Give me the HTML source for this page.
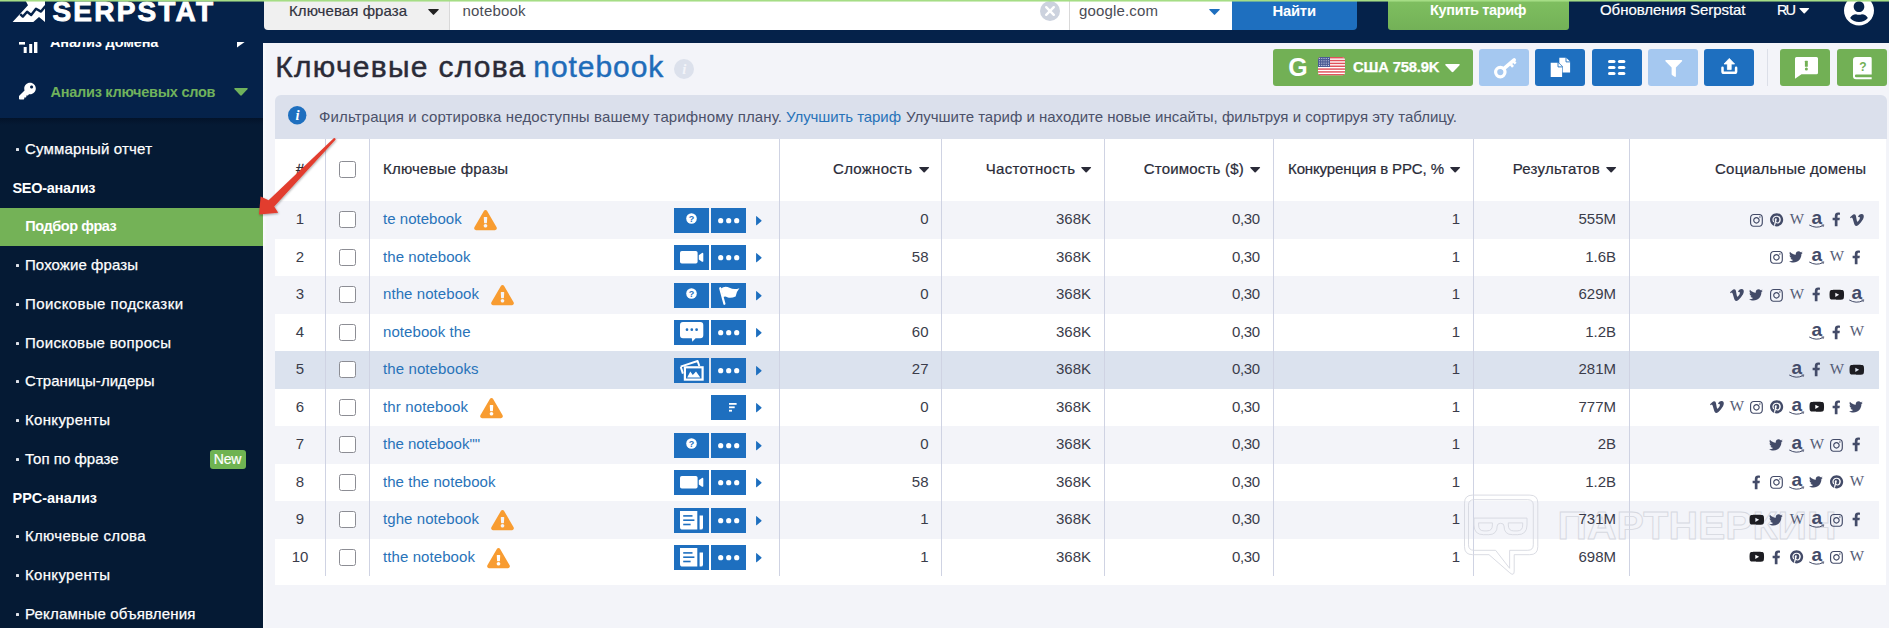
<!DOCTYPE html><html lang="ru"><head><meta charset="utf-8"><title>Serpstat</title><style>html,body{margin:0;padding:0}body{width:1889px;height:628px;overflow:hidden;position:relative;font-family:"Liberation Sans", sans-serif;background:#f3f4f9}svg{display:block;overflow:visible}span{display:block}</style></head><body>
<div style="position:absolute;left:0px;top:0px;width:1889px;height:628px;background:#f3f4f9;"></div>
<div style="position:absolute;left:263px;top:0px;width:1626px;height:43px;background:#05224a;"></div>
<div style="position:absolute;left:0px;top:0px;width:263px;height:628px;background:#051a34;"></div>
<div style="position:absolute;left:0px;top:0px;width:263px;height:118px;background:#05224a;"></div>
<div style="position:absolute;left:0px;top:118px;width:263px;height:7px;background:linear-gradient(#03132a,#051a34);"></div>
<div style="position:absolute;left:263px;top:43px;width:4px;height:585px;background:linear-gradient(90deg,#fafbfd,#f3f4f9);"></div>
<svg style="position:absolute;left:0px;top:0px;" width="60" height="30" viewBox="0 0 60 30"><path d="M25.2 0 L45 0 L45 22 L39 17 L33.3 22 L12.6 22 L28 5.2 Z" fill="#fff" /><path d="M20.2 14.2 L22.8 16.6 L27.1 11.7 L31.2 15 L36 8.8 L41 11.6 L45.5 6" fill="none" stroke="#05224a" stroke-width="2.4" stroke-linejoin="round"/></svg>
<span id="t1" style="position:absolute;top:-2.20px;font-size:28px;line-height:1;white-space:pre;color:#fff;font-weight:700;-webkit-text-stroke:0.9px #fff;letter-spacing:2.185px;left:52.50px;">SERPSTAT</span>
<div style="position:absolute;left:0;top:41.5px;width:263px;height:20px;overflow:hidden">
<span style="position:absolute;left:50px;top:-6.9px;font-size:14.5px;line-height:1;font-weight:700;color:#fff;white-space:pre;letter-spacing:-0.15px">Анализ домена</span>
<svg style="position:absolute;left:19px;top:-3px" width="20" height="16" viewBox="0 0 20 16"><rect x="0" y="3" width="6" height="2.6" fill="#fff"/><rect x="4.7" y="8" width="3" height="6" fill="#fff"/><rect x="10.2" y="5" width="3" height="9" fill="#fff"/><rect x="15" y="1" width="3.4" height="13" fill="#fff"/></svg>
<svg style="position:absolute;left:237px;top:-3px" width="10" height="10" viewBox="0 0 10 10"><path d="M0 8.6 L0 2 L9 2 Z" fill="#fff"/></svg>
</div>
<svg style="position:absolute;left:19.2px;top:82.3px;" width="16.8" height="18.4" viewBox="0 0 512 512"><path d="M512 176.001C512 273.203 433.202 352 336 352c-11.220 0-22.190-1.062-32.827-3.069l-24.012 27.014A23.999 23.999 0 0 1 261.223 384H224v40c0 13.255-10.745 24-24 24h-40v40c0 13.255-10.745 24-24 24H24c-13.255 0-24-10.745-24-24v-78.059c0-6.365 2.529-12.470 7.029-16.971l161.802-161.802C163.108 213.814 160 195.271 160 176 160 78.798 238.797.001 335.999 0 433.488-.001 512 78.511 512 176.001zM336 128c0 26.510 21.490 48 48 48s48-21.490 48-48-21.490-48-48-48-48 21.490-48 48z" fill="#fff" /></svg>
<span id="t2" style="position:absolute;top:84.73px;font-size:14.5px;line-height:1;white-space:pre;color:#70b25c;font-weight:700;letter-spacing:-0.256px;left:50.50px;">Анализ ключевых слов</span>
<svg style="position:absolute;left:234px;top:88px;" width="14" height="8" viewBox="0 0 14 8"><path d="M1.2 0 H12.8 Q14.6 0 13.4 1.3 L7.8 7.3 Q7 8.1 6.2 7.3 L0.6 1.3 Q-0.6 0 1.2 0 Z" fill="#70b25c" /></svg>
<div style="position:absolute;left:16.1px;top:147.95px;width:2.9px;height:2.9px;background:#dde1e8;border-radius:0.6px;"></div>
<span id="t3" style="position:absolute;top:141.00px;font-size:15px;line-height:1;white-space:pre;color:#fff;-webkit-text-stroke:0.25px #fff;letter-spacing:0.179px;left:25.00px;">Суммарный отчет</span>
<span id="t4" style="position:absolute;top:180.73px;font-size:14.5px;line-height:1;white-space:pre;color:#fff;font-weight:700;letter-spacing:-0.297px;left:12.50px;">SEO-анализ</span>
<div style="position:absolute;left:0px;top:208px;width:263px;height:38px;background:#74b257;"></div>
<span id="t5" style="position:absolute;top:218.73px;font-size:14.5px;line-height:1;white-space:pre;color:#fff;font-weight:700;letter-spacing:-0.450px;left:25.30px;">Подбор фраз</span>
<div style="position:absolute;left:16.1px;top:263.95px;width:2.9px;height:2.9px;background:#dde1e8;border-radius:0.6px;"></div>
<span id="t6" style="position:absolute;top:257.00px;font-size:15px;line-height:1;white-space:pre;color:#fff;-webkit-text-stroke:0.25px #fff;letter-spacing:0.091px;left:25.00px;">Похожие фразы</span>
<div style="position:absolute;left:16.1px;top:302.95px;width:2.9px;height:2.9px;background:#dde1e8;border-radius:0.6px;"></div>
<span id="t7" style="position:absolute;top:296.00px;font-size:15px;line-height:1;white-space:pre;color:#fff;-webkit-text-stroke:0.25px #fff;letter-spacing:0.411px;left:25.00px;">Поисковые подсказки</span>
<div style="position:absolute;left:16.1px;top:341.95px;width:2.9px;height:2.9px;background:#dde1e8;border-radius:0.6px;"></div>
<span id="t8" style="position:absolute;top:335.00px;font-size:15px;line-height:1;white-space:pre;color:#fff;-webkit-text-stroke:0.25px #fff;letter-spacing:0.339px;left:25.00px;">Поисковые вопросы</span>
<div style="position:absolute;left:16.1px;top:379.95px;width:2.9px;height:2.9px;background:#dde1e8;border-radius:0.6px;"></div>
<span id="t9" style="position:absolute;top:373.00px;font-size:15px;line-height:1;white-space:pre;color:#fff;-webkit-text-stroke:0.25px #fff;letter-spacing:0.051px;left:25.00px;">Страницы-лидеры</span>
<div style="position:absolute;left:16.1px;top:418.95px;width:2.9px;height:2.9px;background:#dde1e8;border-radius:0.6px;"></div>
<span id="t10" style="position:absolute;top:412.00px;font-size:15px;line-height:1;white-space:pre;color:#fff;-webkit-text-stroke:0.25px #fff;letter-spacing:0.328px;left:25.00px;">Конкуренты</span>
<div style="position:absolute;left:16.1px;top:457.95px;width:2.9px;height:2.9px;background:#dde1e8;border-radius:0.6px;"></div>
<span id="t11" style="position:absolute;top:451.00px;font-size:15px;line-height:1;white-space:pre;color:#fff;-webkit-text-stroke:0.25px #fff;letter-spacing:0.030px;left:25.00px;">Топ по фразе</span>
<span id="t12" style="position:absolute;top:490.73px;font-size:14.5px;line-height:1;white-space:pre;color:#fff;font-weight:700;letter-spacing:-0.042px;left:12.50px;">PPC-анализ</span>
<div style="position:absolute;left:16.1px;top:534.95px;width:2.9px;height:2.9px;background:#dde1e8;border-radius:0.6px;"></div>
<span id="t13" style="position:absolute;top:528.00px;font-size:15px;line-height:1;white-space:pre;color:#fff;-webkit-text-stroke:0.25px #fff;letter-spacing:0.290px;left:25.00px;">Ключевые слова</span>
<div style="position:absolute;left:16.1px;top:573.95px;width:2.9px;height:2.9px;background:#dde1e8;border-radius:0.6px;"></div>
<span id="t14" style="position:absolute;top:567.00px;font-size:15px;line-height:1;white-space:pre;color:#fff;-webkit-text-stroke:0.25px #fff;letter-spacing:0.328px;left:25.00px;">Конкуренты</span>
<div style="position:absolute;left:16.1px;top:612.95px;width:2.9px;height:2.9px;background:#dde1e8;border-radius:0.6px;"></div>
<span id="t15" style="position:absolute;top:606.00px;font-size:15px;line-height:1;white-space:pre;color:#fff;-webkit-text-stroke:0.25px #fff;letter-spacing:0.192px;left:25.00px;">Рекламные объявления</span>
<div style="position:absolute;left:210px;top:450px;width:35.5px;height:18.8px;background:#6fb352;border-radius:3px;"></div>
<span id="t16" style="position:absolute;top:451.95px;font-size:14px;line-height:1;white-space:pre;color:#fff;-webkit-text-stroke:0.2px #fff;letter-spacing:-0.208px;left:213.80px;">New</span>
<!-- header -->
<div style="position:absolute;left:264px;top:0px;width:185.5px;height:29.5px;background:#f0f0f0;border-radius:0 0 0 4px;"></div>
<div style="position:absolute;left:449px;top:0px;width:1px;height:29.5px;background:#d9d9d9;"></div>
<div style="position:absolute;left:450px;top:0px;width:619px;height:29.5px;background:#fff;"></div>
<span id="t17" style="position:absolute;top:2.80px;font-size:15px;line-height:1;white-space:pre;color:#30323e;-webkit-text-stroke:0.2px #30323e;letter-spacing:0.071px;left:289.00px;">Ключевая фраза</span>
<svg style="position:absolute;left:428px;top:8.5px;" width="11" height="6" viewBox="0 0 11 6"><path d="M0.8 0 H10.2 Q11.4 0 10.5 1 L6.1 5.6 Q5.5 6.2 4.9 5.6 L0.5 1 Q-0.4 0 0.8 0 Z" fill="#222" /></svg>
<span id="t18" style="position:absolute;top:2.80px;font-size:15px;line-height:1;white-space:pre;color:#4a4c55;letter-spacing:0.181px;left:462.50px;">notebook</span>
<svg style="position:absolute;left:1040px;top:1px;" width="20" height="20" viewBox="0 0 20 20"><circle cx="10" cy="10" r="10" fill="#ccd2de"/><path d="M6.2 6.2 L13.8 13.8 M13.8 6.2 L6.2 13.8" stroke="#fff" stroke-width="2.4" stroke-linecap="round"/></svg>
<div style="position:absolute;left:1069px;top:0px;width:1px;height:29.5px;background:#d9d9d9;"></div>
<div style="position:absolute;left:1070px;top:0px;width:161.5px;height:29.5px;background:#fff;"></div>
<span id="t19" style="position:absolute;top:2.80px;font-size:15px;line-height:1;white-space:pre;color:#4a4c55;letter-spacing:0.160px;left:1079.00px;">google.com</span>
<svg style="position:absolute;left:1209px;top:8.5px;" width="11" height="6" viewBox="0 0 11 6"><path d="M0.8 0 H10.2 Q11.4 0 10.5 1 L6.1 5.6 Q5.5 6.2 4.9 5.6 L0.5 1 Q-0.4 0 0.8 0 Z" fill="#1e6fbf" /></svg>
<div style="position:absolute;left:1231.5px;top:0px;width:125px;height:29.5px;background:#1e6fbf;border-radius:0 0 4px 0;"></div>
<span id="t20" style="position:absolute;top:3.97px;font-size:14.8px;line-height:1;white-space:pre;color:#fff;font-weight:700;letter-spacing:-0.215px;left:1272.50px;">Найти</span>
<div style="position:absolute;left:1388px;top:0px;width:180.5px;height:29.5px;background:linear-gradient(#7fbf60,#73b157);border-radius:0 0 3px 3px;"></div>
<span id="t21" style="position:absolute;top:2.93px;font-size:14.5px;line-height:1;white-space:pre;color:#fff;font-weight:700;letter-spacing:-0.342px;left:1430.00px;">Купить тариф</span>
<span id="t22" style="position:absolute;top:1.70px;font-size:15px;line-height:1;white-space:pre;color:#fff;-webkit-text-stroke:0.2px #fff;letter-spacing:-0.051px;left:1600.00px;">Обновления Serpstat</span>
<span id="t23" style="position:absolute;top:2.93px;font-size:14.5px;line-height:1;white-space:pre;color:#fff;-webkit-text-stroke:0.2px #fff;letter-spacing:-1.953px;left:1777.00px;">RU</span>
<svg style="position:absolute;left:1799px;top:7.5px;" width="10.5" height="5.5" viewBox="0 0 11 6"><path d="M0.8 0 H10.2 Q11.4 0 10.5 1 L6.1 5.6 Q5.5 6.2 4.9 5.6 L0.5 1 Q-0.4 0 0.8 0 Z" fill="#fff" /></svg>
<svg style="position:absolute;left:1843.5px;top:-5.5px;" width="30" height="31" viewBox="0 0 496 512"><circle cx="248" cy="256" r="240" fill="#05224a"/><path d="M248 8C111 8 0 119 0 256s111 248 248 248 248-111 248-248S385 8 248 8zm0 96c48.600 0 88 39.400 88 88s-39.400 88-88 88-88-39.400-88-88 39.400-88 88-88zm0 344c-58.700 0-111.300-26.600-146.500-68.200 18.800-35.400 55.600-59.800 98.500-59.800 2.400 0 4.800.4 7.100 1.100 13 4.200 26.600 6.900 40.900 6.900 14.300 0 28-2.700 40.900-6.900 2.300-.7 4.700-1.100 7.100-1.100 42.900 0 79.700 24.400 98.500 59.800C359.300 421.400 306.700 448 248 448z" fill="#fff" /></svg>
<span id="t24" style="position:absolute;top:52.20px;font-size:30px;line-height:1;white-space:pre;color:#2a2b38;-webkit-text-stroke:0.45px #2a2b38;letter-spacing:1.272px;left:275.30px;">Ключевые слова</span>
<span id="t25" style="position:absolute;top:52.20px;font-size:30px;line-height:1;white-space:pre;color:#1f6cb9;-webkit-text-stroke:0.45px #1f6cb9;letter-spacing:0.935px;left:533.30px;">notebook</span>
<svg style="position:absolute;left:674.4px;top:58.9px;" width="20" height="20" viewBox="0 0 19 19"><circle cx="9.5" cy="9.5" r="9.5" fill="#dce1ec"/><text x="9.7" y="14.3" font-family="Liberation Serif, serif" font-style="italic" font-weight="700" font-size="14" text-anchor="middle" fill="#f3f4f9">i</text></svg>
<div style="position:absolute;left:1273px;top:49px;width:200px;height:37px;background:#72b055;border-radius:3px;"></div>
<span id="t26" style="position:absolute;top:55.04px;font-size:25px;line-height:1;white-space:pre;color:#fff;font-weight:700;left:1288.30px;">G</span>
<svg style="position:absolute;left:1318px;top:57.2px;" width="27" height="18.5" viewBox="0 0 27 18.5"><defs><clipPath id="fc"><rect x="0" y="0" width="27" height="18.5" rx="3"/></clipPath></defs><g clip-path="url(#fc)"><rect x="0" y="0" width="27" height="18.5" rx="2.5" fill="#fff"/><rect x="0" y="0.00" width="27" height="1.45" fill="#e0505a"/><rect x="0" y="2.84" width="27" height="1.45" fill="#e0505a"/><rect x="0" y="5.68" width="27" height="1.45" fill="#e0505a"/><rect x="0" y="8.52" width="27" height="1.45" fill="#e0505a"/><rect x="0" y="11.36" width="27" height="1.45" fill="#e0505a"/><rect x="0" y="14.20" width="27" height="1.45" fill="#e0505a"/><rect x="0" y="17.04" width="27" height="1.45" fill="#e0505a"/><rect x="0" y="0" width="12" height="10" fill="#4b5b94"/><circle cx="1.6" cy="1.5" r="0.55" fill="#dfe3f2"/><circle cx="3.8" cy="1.5" r="0.55" fill="#dfe3f2"/><circle cx="6.0" cy="1.5" r="0.55" fill="#dfe3f2"/><circle cx="8.2" cy="1.5" r="0.55" fill="#dfe3f2"/><circle cx="10.4" cy="1.5" r="0.55" fill="#dfe3f2"/><circle cx="1.6" cy="3.8" r="0.55" fill="#dfe3f2"/><circle cx="3.8" cy="3.8" r="0.55" fill="#dfe3f2"/><circle cx="6.0" cy="3.8" r="0.55" fill="#dfe3f2"/><circle cx="8.2" cy="3.8" r="0.55" fill="#dfe3f2"/><circle cx="10.4" cy="3.8" r="0.55" fill="#dfe3f2"/><circle cx="1.6" cy="6.1" r="0.55" fill="#dfe3f2"/><circle cx="3.8" cy="6.1" r="0.55" fill="#dfe3f2"/><circle cx="6.0" cy="6.1" r="0.55" fill="#dfe3f2"/><circle cx="8.2" cy="6.1" r="0.55" fill="#dfe3f2"/><circle cx="10.4" cy="6.1" r="0.55" fill="#dfe3f2"/><circle cx="1.6" cy="8.4" r="0.55" fill="#dfe3f2"/><circle cx="3.8" cy="8.4" r="0.55" fill="#dfe3f2"/><circle cx="6.0" cy="8.4" r="0.55" fill="#dfe3f2"/><circle cx="8.2" cy="8.4" r="0.55" fill="#dfe3f2"/><circle cx="10.4" cy="8.4" r="0.55" fill="#dfe3f2"/></g></svg>
<span id="t27" style="position:absolute;top:60.07px;font-size:14.8px;line-height:1;white-space:pre;color:#fff;font-weight:700;-webkit-text-stroke:0.25px #fff;letter-spacing:-0.175px;left:1353.00px;">США 758.9K</span>
<svg style="position:absolute;left:1444.8px;top:64px;" width="15" height="8.5" viewBox="0 0 14 8"><path d="M1.2 0 H12.8 Q14.6 0 13.4 1.3 L7.8 7.3 Q7 8.1 6.2 7.3 L0.6 1.3 Q-0.6 0 1.2 0 Z" fill="#fff" /></svg>
<div style="position:absolute;left:1479px;top:49px;width:49.5px;height:37px;background:#a5c8f0;border-radius:3px;"></div>
<div style="position:absolute;left:1535px;top:49px;width:49.5px;height:37px;background:#1e6fbf;border-radius:3px;"></div>
<div style="position:absolute;left:1592px;top:49px;width:49.5px;height:37px;background:#1e6fbf;border-radius:3px;"></div>
<div style="position:absolute;left:1648px;top:49px;width:49.5px;height:37px;background:#a5c8f0;border-radius:3px;"></div>
<div style="position:absolute;left:1703.5px;top:49px;width:50px;height:37px;background:#1e6fbf;border-radius:3px;"></div>
<div style="position:absolute;left:1767.2px;top:49px;width:1px;height:37px;background:#dcdfe8;"></div>
<div style="position:absolute;left:1780px;top:49px;width:50px;height:37px;background:#72b055;border-radius:3px;"></div>
<div style="position:absolute;left:1837px;top:49px;width:49.8px;height:37px;background:#72b055;border-radius:3px;"></div>
<svg style="position:absolute;left:1490px;top:55px;" width="30" height="26" viewBox="0 0 30 26"><circle cx="10.3" cy="17.1" r="4.7" fill="none" stroke="#fff" stroke-width="3.2"/><path d="M13.9 13.7 L24.2 4.9" stroke="#fff" stroke-width="3.6" stroke-linecap="round"/><path d="M20.2 8.6 L23 11.8 M23.2 6 L25.6 8.6" stroke="#fff" stroke-width="2.6" stroke-linecap="butt"/></svg>
<svg style="position:absolute;left:1550px;top:57px;" width="22" height="22" viewBox="0 0 22 22"><path d="M9.3 0.7 H16.2 L20.1 4.6 V15.6 H9.3 Z" fill="#fff" /><path d="M16 0.4 V4.9 H20.4" fill="none" stroke="#1e6fbf" stroke-width="0.9"/><path d="M0.7 5.7 H8.2 L12.1 9.600 V20 H0.7 Z" fill="#fff" stroke="#1e6fbf" stroke-width="1.1" paint-order="stroke"/><path d="M8 5.400 V9.900 H12.400" fill="none" stroke="#1e6fbf" stroke-width="0.9"/></svg>
<svg style="position:absolute;left:1607.9px;top:60px;" width="18" height="16" viewBox="0 0 18 16"><rect x="0.0" y="0.0" width="7.5" height="3.1" rx="1.55" fill="#fff"/><rect x="9.9" y="0.0" width="7.5" height="3.1" rx="1.55" fill="#fff"/><rect x="0.0" y="6.0" width="7.5" height="3.1" rx="1.55" fill="#fff"/><rect x="9.9" y="6.0" width="7.5" height="3.1" rx="1.55" fill="#fff"/><rect x="0.0" y="12.0" width="7.5" height="3.1" rx="1.55" fill="#fff"/><rect x="9.9" y="12.0" width="7.5" height="3.1" rx="1.55" fill="#fff"/></svg>
<svg style="position:absolute;left:1664.5px;top:59.5px;" width="17.5" height="17" viewBox="0 0 512 512"><path d="M487.976 0H24.028C2.710 0-8.047 25.866 7.058 40.971L192 225.941V432c0 7.831 3.821 15.170 10.237 19.662l80 55.980C298.020 518.690 320 507.493 320 487.980V225.941l184.947-184.970C520.021 25.896 509.338 0 487.976 0z" fill="#fff" /></svg>
<svg style="position:absolute;left:1720px;top:57px;" width="19" height="19" viewBox="0 0 19 19"><path d="M9.3 1.4 L4 7 H7.4 V12.6 H11.2 V7 H14.6 Z" fill="#fff" stroke="#fff" stroke-width="0.8" stroke-linejoin="round"/><path d="M2.500 10.800 V14.500 Q2.500 15.800 3.800 15.800 H14.800 Q16.100 15.800 16.100 14.500 V10.800" fill="none" stroke="#fff" stroke-width="2.500" stroke-linecap="round"/></svg>
<svg style="position:absolute;left:1795px;top:57.3px;" width="24" height="22" viewBox="0 0 24 22"><path d="M1.500 0 H21.500 Q23 0 23 1.500 V15.800 Q23 17.300 21.500 17.300 H6.500 L0 21.800 V1.500 Q0 0 1.500 0 Z" fill="#fff"/><rect x="9.900" y="3.800" width="2.900" height="6" rx="0.500" fill="#72b055"/><circle cx="11.350" cy="12" r="1.500" fill="#72b055"/></svg>
<svg style="position:absolute;left:1853.4px;top:56.9px;" width="19" height="23" viewBox="0 0 19 23"><path d="M3 0 H17.300 Q18.700 0 18.700 1.400 V17.600 H3.200 Q1.900 17.600 1.900 18.900 Q1.900 20.200 3.200 20.200 H18.700 V22.300 H3 Q0 22.300 0 19.300 V3 Q0 0 3 0 Z" fill="#fff"/><text x="9.900" y="14" font-family="Liberation Sans, sans-serif" font-weight="700" font-size="12" text-anchor="middle" fill="#72b055">?</text></svg>
<!-- table -->
<div style="position:absolute;left:274.5px;top:94.6px;width:1612.5px;height:44px;background:#dbe0ec;border-radius:6px 6px 0 0;"></div>
<svg style="position:absolute;left:287.8px;top:106.3px;" width="18.4" height="18.4" viewBox="0 0 18.4 18.4"><circle cx="9.2" cy="9.2" r="9.2" fill="#1e6fbf"/><text x="9.6" y="14.2" font-family="Liberation Serif, serif" font-style="italic" font-weight="700" font-size="14.5" text-anchor="middle" fill="#fff">i</text></svg>
<span id="t28" style="position:absolute;top:109.20px;font-size:15px;line-height:1;white-space:pre;color:#4b5169;letter-spacing:0.125px;left:319.00px;">Фильтрация и сортировка недоступны вашему тарифному плану.</span>
<span id="t29" style="position:absolute;top:109.20px;font-size:15px;line-height:1;white-space:pre;color:#2873b9;letter-spacing:-0.075px;left:786.00px;">Улучшить тариф</span>
<span id="t30" style="position:absolute;top:109.20px;font-size:15px;line-height:1;white-space:pre;color:#4b5169;letter-spacing:-0.005px;left:906.00px;">Улучшите тариф и находите новые инсайты, фильтруя и сортируя эту таблицу.</span>
<div style="position:absolute;left:275px;top:138.5px;width:1611px;height:446px;background:#fff;"></div>
<div style="position:absolute;left:275px;top:201.3px;width:1604px;height:37.3px;background:#f3f4f9;"></div>
<div style="position:absolute;left:275px;top:276.3px;width:1604px;height:37.3px;background:#f3f4f9;"></div>
<div style="position:absolute;left:275px;top:351.3px;width:1604px;height:37.3px;background:#dbe2ee;"></div>
<div style="position:absolute;left:275px;top:426.3px;width:1604px;height:37.3px;background:#f3f4f9;"></div>
<div style="position:absolute;left:275px;top:501.3px;width:1604px;height:37.3px;background:#f3f4f9;"></div>
<div style="position:absolute;left:325.3px;top:138.5px;width:1px;height:437.2px;background:#cfd3e3;"></div>
<div style="position:absolute;left:369.3px;top:138.5px;width:1px;height:437.2px;background:#cfd3e3;"></div>
<div style="position:absolute;left:779.3px;top:138.5px;width:1px;height:437.2px;background:#cfd3e3;"></div>
<div style="position:absolute;left:941.3px;top:138.5px;width:1px;height:437.2px;background:#cfd3e3;"></div>
<div style="position:absolute;left:1104.3px;top:138.5px;width:1px;height:437.2px;background:#cfd3e3;"></div>
<div style="position:absolute;left:1273.3px;top:138.5px;width:1px;height:437.2px;background:#cfd3e3;"></div>
<div style="position:absolute;left:1473.3px;top:138.5px;width:1px;height:437.2px;background:#cfd3e3;"></div>
<div style="position:absolute;left:1629.3px;top:138.5px;width:1px;height:437.2px;background:#cfd3e3;"></div>
<svg style="position:absolute;left:1464px;top:495.3px;" width="380" height="85" viewBox="0 0 380 85"><g fill="none" stroke="#d6d8e0" stroke-width="0.9"><path d="M8.500 0.1 H65.800 Q73.800 0.1 73.800 8.100 V51.700 Q73.800 59.700 65.800 59.700 H50.200 V76 Q50.200 81.500 45.800 77.800 L25 59.700 H8.500 Q0.500 59.700 0.500 51.700 V8.100 Q0.500 0.100 8.500 0.100 Z"/><path d="M10 4.700 H63.800 Q69.300 4.700 69.300 10.200 V49.800 Q69.300 55.300 63.800 55.300 H45.600 V73.300 L31.600 55.300 H10 Q4.500 55.300 4.500 49.800 V10.200 Q4.500 4.700 10 4.700 Z"/><path d="M10 23.100 H63 V30 Q63 39.700 53.500 39.700 H48.500 Q40 39.700 40 31 Q40 28.300 36.600 28.300 Q33.200 28.300 33.200 31 Q33.200 39.700 24.500 39.700 H19.500 Q10 39.700 10 30 Z"/><path d="M14.600 27.900 H28.400 V30 Q28.400 35.900 23 35.900 H20 Q14.600 35.900 14.600 30 Z"/><path d="M44.300 27.900 H58.700 V30 Q58.700 35.900 53.300 35.900 H49.700 Q44.300 35.900 44.300 30 Z"/></g><text x="93.600" y="43.700" font-family="Liberation Sans, sans-serif" font-weight="700" font-size="39.500" fill="none" stroke="#d6d8e0" stroke-width="0.9" textLength="279" lengthAdjust="spacingAndGlyphs">ПАРТНЕРКИН</text></svg>
<div style="position:absolute;left:339.3px;top:161.3px;width:14.7px;height:15.2px;border:1px solid #8c8d94;border-radius:2.5px;background:#fff"></div>
<span id="t31" style="position:absolute;top:160.90px;font-size:15px;line-height:1;white-space:pre;color:#2a2b38;-webkit-text-stroke:0.3px #2a2b38;left:296.00px;">#</span>
<span id="t32" style="position:absolute;top:160.90px;font-size:15px;line-height:1;white-space:pre;color:#2a2b38;-webkit-text-stroke:0.22px #2a2b38;letter-spacing:0.204px;left:383.00px;">Ключевые фразы</span>
<span id="t33" style="position:absolute;top:160.90px;font-size:15px;line-height:1;white-space:pre;color:#2a2b38;-webkit-text-stroke:0.22px #2a2b38;letter-spacing:0.277px;right:976.72px;">Сложность</span>
<svg style="position:absolute;left:918.7px;top:167.20000000000002px;" width="10.3" height="5.6" viewBox="0 0 11 6"><path d="M0.8 0 H10.2 Q11.4 0 10.5 1 L6.1 5.6 Q5.5 6.2 4.9 5.6 L0.5 1 Q-0.4 0 0.8 0 Z" fill="#2a2b38" /></svg>
<span id="t34" style="position:absolute;top:160.90px;font-size:15px;line-height:1;white-space:pre;color:#2a2b38;-webkit-text-stroke:0.22px #2a2b38;letter-spacing:0.305px;right:813.70px;">Частотность</span>
<svg style="position:absolute;left:1080.7px;top:167.20000000000002px;" width="10.3" height="5.6" viewBox="0 0 11 6"><path d="M0.8 0 H10.2 Q11.4 0 10.5 1 L6.1 5.6 Q5.5 6.2 4.9 5.6 L0.5 1 Q-0.4 0 0.8 0 Z" fill="#2a2b38" /></svg>
<span id="t35" style="position:absolute;top:160.90px;font-size:15px;line-height:1;white-space:pre;color:#2a2b38;-webkit-text-stroke:0.22px #2a2b38;letter-spacing:0.199px;right:645.10px;">Стоимость ($)</span>
<svg style="position:absolute;left:1249.7px;top:167.20000000000002px;" width="10.3" height="5.6" viewBox="0 0 11 6"><path d="M0.8 0 H10.2 Q11.4 0 10.5 1 L6.1 5.6 Q5.5 6.2 4.9 5.6 L0.5 1 Q-0.4 0 0.8 0 Z" fill="#2a2b38" /></svg>
<span id="t36" style="position:absolute;top:160.90px;font-size:15px;line-height:1;white-space:pre;color:#2a2b38;-webkit-text-stroke:0.22px #2a2b38;letter-spacing:-0.122px;right:445.12px;">Конкуренция в PPC, %</span>
<svg style="position:absolute;left:1449.7px;top:167.20000000000002px;" width="10.3" height="5.6" viewBox="0 0 11 6"><path d="M0.8 0 H10.2 Q11.4 0 10.5 1 L6.1 5.6 Q5.5 6.2 4.9 5.6 L0.5 1 Q-0.4 0 0.8 0 Z" fill="#2a2b38" /></svg>
<span id="t37" style="position:absolute;top:160.90px;font-size:15px;line-height:1;white-space:pre;color:#2a2b38;-webkit-text-stroke:0.22px #2a2b38;letter-spacing:0.263px;right:289.04px;">Результатов</span>
<svg style="position:absolute;left:1605.7px;top:167.20000000000002px;" width="10.3" height="5.6" viewBox="0 0 11 6"><path d="M0.8 0 H10.2 Q11.4 0 10.5 1 L6.1 5.6 Q5.5 6.2 4.9 5.6 L0.5 1 Q-0.4 0 0.8 0 Z" fill="#2a2b38" /></svg>
<span id="t38" style="position:absolute;top:160.90px;font-size:15px;line-height:1;white-space:pre;color:#2a2b38;-webkit-text-stroke:0.22px #2a2b38;letter-spacing:0.222px;right:22.78px;">Социальные домены</span>
<span id="t39" style="position:absolute;top:210.60px;font-size:15px;line-height:1;white-space:pre;color:#3a3c4a;left:300.00px;transform:translateX(-50%);margin-left:0.00px;">1</span>
<div style="position:absolute;left:339.2px;top:211.2px;width:14.7px;height:15.2px;border:1px solid #8c8d94;border-radius:2.5px;background:#fff"></div>
<span id="t40" style="position:absolute;top:210.60px;font-size:15px;line-height:1;white-space:pre;color:#2873b9;letter-spacing:0.029px;left:383.00px;">te notebook</span>
<svg style="position:absolute;left:473.8px;top:210.4px;" width="23" height="20.2" viewBox="0 0 576 512"><path d="M569.517 440.013C587.975 472.007 564.806 512 527.940 512H48.054c-36.937 0-59.999-40.055-41.577-71.987L246.423 23.985c18.467-32.009 64.720-31.951 83.154 0l239.940 416.028zM288 354c-25.405 0-46 20.595-46 46s20.595 46 46 46 46-20.595 46-46-20.595-46-46-46zm-43.673-165.346l7.418 136c.347 6.364 5.609 11.346 11.982 11.346h48.546c6.373 0 11.635-4.982 11.982-11.346l7.418-136c.375-6.874-5.098-12.654-11.982-12.654h-63.383c-6.884 0-12.356 5.780-11.981 12.654z" fill="#f89c31" /></svg>
<div style="position:absolute;left:674px;top:208.0px;width:34.8px;height:24.6px;background:#1e6fbf;"></div>
<svg style="position:absolute;left:686.2px;top:213.4px;" width="11" height="11" viewBox="0 0 11 11"><circle cx="5.500" cy="5.500" r="5.300" fill="#fff"/><text x="5.500" y="8.8" font-family="Liberation Sans, sans-serif" font-weight="700" font-size="9" text-anchor="middle" fill="#1e6fbf">?</text></svg>
<div style="position:absolute;left:711.2px;top:208.0px;width:34.8px;height:24.6px;background:#1e6fbf;"></div>
<svg style="position:absolute;left:717.8px;top:217.60000000000002px;" width="21.4" height="5.4" viewBox="0 0 21.4 5.4"><circle cx="2.7" cy="2.7" r="2.600" fill="#fff"/><circle cx="10.700" cy="2.7" r="2.600" fill="#fff"/><circle cx="18.700" cy="2.7" r="2.600" fill="#fff"/></svg>
<svg style="position:absolute;left:756px;top:215.8px;" width="5.8" height="9.4" viewBox="0 0 6 10"><path d="M0 0.800 Q0 -0.300 0.900 0.400 L5.600 4.500 Q6.200 5 5.600 5.500 L0.900 9.600 Q0 10.300 0 9.200 Z" fill="#1e6fbf" /></svg>
<span id="t41" style="position:absolute;top:210.60px;font-size:15px;line-height:1;white-space:pre;color:#3a3c4a;right:960.50px;">0</span>
<span id="t42" style="position:absolute;top:210.60px;font-size:15px;line-height:1;white-space:pre;color:#3a3c4a;letter-spacing:-0.016px;right:798.02px;">368K</span>
<span id="t43" style="position:absolute;top:210.60px;font-size:15px;line-height:1;white-space:pre;color:#3a3c4a;letter-spacing:-0.401px;right:629.40px;">0,30</span>
<span id="t44" style="position:absolute;top:210.60px;font-size:15px;line-height:1;white-space:pre;color:#3a3c4a;right:429.00px;">1</span>
<span id="t45" style="position:absolute;top:210.60px;font-size:15px;line-height:1;white-space:pre;color:#3a3c4a;right:273.00px;">555M</span>
<svg style="position:absolute;left:1750.2px;top:212.8px;" width="12.9" height="14.74" viewBox="0 0 448 512"><path d="M224.1 141c-63.6 0-114.9 51.3-114.9 114.9s51.3 114.9 114.9 114.9S339 319.5 339 255.9 287.7 141 224.1 141zm0 189.6c-41.1 0-74.7-33.5-74.7-74.7s33.5-74.7 74.7-74.7 74.7 33.5 74.7 74.7-33.6 74.7-74.7 74.7zm146.4-194.3c0 14.9-12 26.8-26.8 26.8-14.9 0-26.8-12-26.8-26.8s12-26.8 26.8-26.8 26.8 12 26.8 26.8zm76.1 27.2c-1.7-35.9-9.9-67.7-36.2-93.9-26.2-26.2-58-34.4-93.9-36.2-37-2.1-147.9-2.1-184.9 0-35.8 1.7-67.6 9.9-93.9 36.1s-34.4 58-36.2 93.9c-2.1 37-2.1 147.9 0 184.9 1.7 35.9 9.900 67.700 36.200 93.900s58 34.400 93.900 36.200c37 2.100 147.900 2.100 184.900 0 35.900-1.700 67.700-9.900 93.900-36.200 26.200-26.200 34.400-58 36.200-93.900 2.100-37 2.100-147.800 0-184.800zM398.800 388c-7.800 19.600-22.900 34.700-42.600 42.600-29.500 11.700-99.500 9-132.100 9s-102.700 2.600-132.100-9c-19.600-7.800-34.700-22.900-42.600-42.600-11.700-29.500-9-99.500-9-132.100s-2.600-102.700 9-132.100c7.800-19.600 22.900-34.700 42.600-42.600 29.500-11.700 99.500-9 132.100-9s102.700-2.600 132.100 9c19.600 7.800 34.700 22.900 42.600 42.600 11.700 29.500 9 99.500 9 132.100s2.700 102.700-9 132.100z" fill="#434b68" /></svg>
<svg style="position:absolute;left:1770.1000000000001px;top:213.0px;" width="13.2" height="13.6" viewBox="0 0 496 512"><path d="M496 256c0 137-111 248-248 248-25.600 0-50.200-3.900-73.400-11.100 10.100-16.500 25.200-43.500 30.800-65 3-11.600 15.400-59 15.400-59 8.100 15.400 31.700 28.500 56.800 28.500 74.800 0 128.700-68.800 128.700-154.300 0-81.900-66.900-143.200-152.900-143.200-107 0-163.900 71.800-163.900 150.100 0 36.400 19.400 81.700 50.300 96.100 4.700 2.200 7.200 1.200 8.300-3.300.8-3.400 5-20.300 6.900-28.100.6-2.500.3-4.700-1.700-7.100-10.100-12.500-18.300-35.300-18.300-56.600 0-54.700 41.400-107.600 112-107.600 60.900 0 103.600 41.500 103.600 100.900 0 67.100-33.900 113.600-78 113.600-24.300 0-42.600-20.100-36.700-44.800 7-29.500 20.500-61.300 20.500-82.600 0-19-10.200-34.900-31.400-34.900-24.900 0-44.900 25.700-44.900 60.200 0 22 7.400 36.800 7.400 36.800s-24.500 103.800-29 123.200c-5 21.400-3 51.600-.9 71.200C65.400 450.900 0 361.100 0 256 0 119 111 8 248 8s248 111 248 248z" fill="#434b68" /></svg>
<svg style="position:absolute;left:1788.7px;top:211.8px;" width="16" height="16" viewBox="0 0 16 16"><text transform="translate(7.900 12.300) scale(1.07 1)" x="0" y="0" font-family="Liberation Serif, serif" font-size="14.200" text-anchor="middle" fill="#555c76">W</text></svg>
<svg style="position:absolute;left:1807.7px;top:209.8px;" width="18" height="20" viewBox="0 0 18 20"><text x="8.800" y="14.100" font-family="Liberation Sans, sans-serif" font-weight="700" font-size="19" text-anchor="middle" fill="#434b68">a</text><path d="M1.600 15.200 Q8.200 19 14.600 15.800" fill="none" stroke="#434b68" stroke-width="1" stroke-linecap="round"/><path d="M13.300 15 L15.900 14.800 L15 17" fill="none" stroke="#434b68" stroke-width="0.750"/></svg>
<svg style="position:absolute;left:1832.3px;top:212.4px;" width="8.6" height="14.9" viewBox="0 0 320 512"><path d="M279.14 288l14.22-92.66h-88.91v-60.13c0-25.35 12.42-50.06 52.24-50.06h40.42V6.26S260.43 0 225.36 0c-73.22 0-121.08 44.38-121.08 124.72v70.62H22.89V288h81.39v224h100.17V288z" fill="#434b68" /></svg>
<svg style="position:absolute;left:1849.5px;top:211.8px;" width="13.8" height="16" viewBox="0 0 448 512"><path d="M447.8 153.6c-2 43.600-32.400 103.300-91.400 179.100-60.900 79.200-112.400 118.800-154.600 118.800-26.100 0-48.200-24.100-66.300-72.300C100.300 250 85.300 174.300 56.200 174.300c-3.400 0-15.100 7.100-35.200 21.100L0 168.200c51.600-45.300 100.900-95.700 131.800-98.500 34.900-3.400 56.300 20.500 64.400 71.500 28.700 181.500 41.400 208.900 93.600 126.700 18.700-29.600 28.800-52.100 30.200-67.600 4.800-45.900-35.800-42.800-63.300-31 22-72.100 64.100-107.100 126.200-105.100 45.800 1.200 67.500 31.100 64.900 89.400z" fill="#434b68" /></svg>
<span id="t46" style="position:absolute;top:248.60px;font-size:15px;line-height:1;white-space:pre;color:#3a3c4a;left:300.00px;transform:translateX(-50%);margin-left:0.00px;">2</span>
<div style="position:absolute;left:339.2px;top:249.0px;width:14.7px;height:15.2px;border:1px solid #8c8d94;border-radius:2.5px;background:#fff"></div>
<span id="t47" style="position:absolute;top:248.60px;font-size:15px;line-height:1;white-space:pre;color:#2873b9;letter-spacing:0.068px;left:383.00px;">the notebook</span>
<div style="position:absolute;left:674px;top:245.2px;width:34.8px;height:24.6px;background:#1e6fbf;"></div>
<svg style="position:absolute;left:679.7px;top:251.2px;" width="24" height="12.6" viewBox="0 0 24 12.6"><rect x="0" y="0" width="17.600" height="12.600" rx="1.800" fill="#fff"/><path d="M18.800 4.200 L22 1.900 Q23.300 1.300 23.300 2.700 V9.900 Q23.300 11.300 22 10.700 L18.800 8.400 Z" fill="#fff"/></svg>
<div style="position:absolute;left:711.2px;top:245.2px;width:34.8px;height:24.6px;background:#1e6fbf;"></div>
<svg style="position:absolute;left:717.8px;top:254.8px;" width="21.4" height="5.4" viewBox="0 0 21.4 5.4"><circle cx="2.7" cy="2.7" r="2.600" fill="#fff"/><circle cx="10.700" cy="2.7" r="2.600" fill="#fff"/><circle cx="18.700" cy="2.7" r="2.600" fill="#fff"/></svg>
<svg style="position:absolute;left:756px;top:253.10000000000002px;" width="5.8" height="9.4" viewBox="0 0 6 10"><path d="M0 0.800 Q0 -0.300 0.900 0.400 L5.600 4.500 Q6.200 5 5.600 5.500 L0.900 9.600 Q0 10.300 0 9.200 Z" fill="#1e6fbf" /></svg>
<span id="t48" style="position:absolute;top:248.60px;font-size:15px;line-height:1;white-space:pre;color:#3a3c4a;right:960.50px;">58</span>
<span id="t49" style="position:absolute;top:248.60px;font-size:15px;line-height:1;white-space:pre;color:#3a3c4a;letter-spacing:-0.016px;right:798.02px;">368K</span>
<span id="t50" style="position:absolute;top:248.60px;font-size:15px;line-height:1;white-space:pre;color:#3a3c4a;letter-spacing:-0.401px;right:629.40px;">0,30</span>
<span id="t51" style="position:absolute;top:248.60px;font-size:15px;line-height:1;white-space:pre;color:#3a3c4a;right:429.00px;">1</span>
<span id="t52" style="position:absolute;top:248.60px;font-size:15px;line-height:1;white-space:pre;color:#3a3c4a;right:273.00px;">1.6B</span>
<svg style="position:absolute;left:1770.2px;top:250.10000000000002px;" width="12.9" height="14.74" viewBox="0 0 448 512"><path d="M224.1 141c-63.6 0-114.9 51.3-114.9 114.9s51.3 114.9 114.9 114.9S339 319.5 339 255.9 287.7 141 224.1 141zm0 189.6c-41.1 0-74.7-33.5-74.7-74.7s33.5-74.7 74.7-74.7 74.7 33.5 74.7 74.7-33.6 74.7-74.7 74.7zm146.4-194.3c0 14.9-12 26.8-26.8 26.8-14.9 0-26.8-12-26.8-26.8s12-26.8 26.8-26.8 26.8 12 26.8 26.8zm76.1 27.2c-1.7-35.9-9.9-67.7-36.2-93.9-26.2-26.2-58-34.4-93.9-36.2-37-2.1-147.9-2.1-184.9 0-35.8 1.7-67.6 9.9-93.9 36.1s-34.4 58-36.2 93.9c-2.1 37-2.1 147.9 0 184.9 1.7 35.9 9.900 67.700 36.200 93.900s58 34.400 93.900 36.200c37 2.100 147.900 2.100 184.900 0 35.900-1.700 67.700-9.900 93.900-36.200 26.200-26.200 34.400-58 36.200-93.900 2.100-37 2.100-147.800 0-184.800zM398.800 388c-7.800 19.600-22.900 34.700-42.600 42.600-29.500 11.700-99.500 9-132.100 9s-102.700 2.600-132.100-9c-19.600-7.800-34.700-22.900-42.600-42.600-11.700-29.500-9-99.500-9-132.100s-2.600-102.700 9-132.100c7.800-19.600 22.900-34.700 42.600-42.600 29.500-11.700 99.500-9 132.100-9s102.700-2.600 132.100 9c19.600 7.800 34.700 22.900 42.600 42.600 11.700 29.500 9 99.500 9 132.100s2.700 102.700-9 132.100z" fill="#434b68" /></svg>
<svg style="position:absolute;left:1789.3px;top:250.3px;" width="13.8" height="13.8" viewBox="0 0 512 512"><path d="M459.37 151.716c.325 4.548.325 9.097.325 13.645 0 138.72-105.583 298.558-298.558 298.558-59.452 0-114.68-17.219-161.137-47.106 8.447.974 16.568 1.299 25.34 1.299 49.055 0 94.213-16.568 130.274-44.832-46.132-.975-84.792-31.188-98.112-72.772 6.498.974 12.995 1.624 19.818 1.624 9.421 0 18.843-1.3 27.614-3.573-48.081-9.747-84.143-51.98-84.143-102.985v-1.299c13.969 7.797 30.214 12.67 47.431 13.319-28.264-18.843-46.781-51.005-46.781-87.391 0-19.492 5.197-37.36 14.294-52.954 51.655 63.675 129.3 105.258 216.365 109.807-1.624-7.797-2.599-15.918-2.599-24.04 0-57.828 46.782-104.934 104.934-104.934 30.213 0 57.502 12.67 76.67 33.137 23.715-4.548 46.456-13.32 66.599-25.34-7.798 24.366-24.366 44.833-46.132 57.827 21.117-2.273 41.584-8.122 60.426-16.243-14.292 20.791-32.161 39.308-52.628 54.253z" fill="#434b68" /></svg>
<svg style="position:absolute;left:1807.7px;top:247.10000000000002px;" width="18" height="20" viewBox="0 0 18 20"><text x="8.800" y="14.100" font-family="Liberation Sans, sans-serif" font-weight="700" font-size="19" text-anchor="middle" fill="#434b68">a</text><path d="M1.600 15.200 Q8.200 19 14.600 15.800" fill="none" stroke="#434b68" stroke-width="1" stroke-linecap="round"/><path d="M13.300 15 L15.900 14.800 L15 17" fill="none" stroke="#434b68" stroke-width="0.750"/></svg>
<svg style="position:absolute;left:1828.7px;top:249.10000000000002px;" width="16" height="16" viewBox="0 0 16 16"><text transform="translate(7.900 12.300) scale(1.07 1)" x="0" y="0" font-family="Liberation Serif, serif" font-size="14.200" text-anchor="middle" fill="#555c76">W</text></svg>
<svg style="position:absolute;left:1852.3px;top:249.70000000000002px;" width="8.6" height="14.9" viewBox="0 0 320 512"><path d="M279.14 288l14.22-92.66h-88.91v-60.13c0-25.35 12.42-50.06 52.24-50.06h40.42V6.26S260.43 0 225.36 0c-73.22 0-121.08 44.38-121.08 124.72v70.62H22.89V288h81.39v224h100.17V288z" fill="#434b68" /></svg>
<span id="t53" style="position:absolute;top:285.60px;font-size:15px;line-height:1;white-space:pre;color:#3a3c4a;left:300.00px;transform:translateX(-50%);margin-left:0.00px;">3</span>
<div style="position:absolute;left:339.2px;top:286.2px;width:14.7px;height:15.2px;border:1px solid #8c8d94;border-radius:2.5px;background:#fff"></div>
<span id="t54" style="position:absolute;top:285.60px;font-size:15px;line-height:1;white-space:pre;color:#2873b9;letter-spacing:0.076px;left:383.00px;">nthe notebook</span>
<svg style="position:absolute;left:491.1px;top:285.4px;" width="23" height="20.2" viewBox="0 0 576 512"><path d="M569.517 440.013C587.975 472.007 564.806 512 527.940 512H48.054c-36.937 0-59.999-40.055-41.577-71.987L246.423 23.985c18.467-32.009 64.720-31.951 83.154 0l239.940 416.028zM288 354c-25.405 0-46 20.595-46 46s20.595 46 46 46 46-20.595 46-46-20.595-46-46-46zm-43.673-165.346l7.418 136c.347 6.364 5.609 11.346 11.982 11.346h48.546c6.373 0 11.635-4.982 11.982-11.346l7.418-136c.375-6.874-5.098-12.654-11.982-12.654h-63.383c-6.884 0-12.356 5.780-11.981 12.654z" fill="#f89c31" /></svg>
<div style="position:absolute;left:674px;top:283.0px;width:34.8px;height:24.6px;background:#1e6fbf;"></div>
<svg style="position:absolute;left:686.2px;top:288.40000000000003px;" width="11" height="11" viewBox="0 0 11 11"><circle cx="5.500" cy="5.500" r="5.300" fill="#fff"/><text x="5.500" y="8.8" font-family="Liberation Sans, sans-serif" font-weight="700" font-size="9" text-anchor="middle" fill="#1e6fbf">?</text></svg>
<div style="position:absolute;left:711.2px;top:283.0px;width:34.8px;height:24.6px;background:#1e6fbf;"></div>
<svg style="position:absolute;left:719.2px;top:286.3px;" width="21" height="19" viewBox="0 0 21 19"><path d="M1.2 2.2 L5.400 17.8" stroke="#fff" stroke-width="2.2" stroke-linecap="round"/><path d="M2 2.4 Q6 -0.6 10.500 1.800 Q15 4.2 20.400 2.2 Q17.500 5.400 16.600 10.600 Q11.600 12.8 8.300 11.200 Q6 10 4.300 11.200 Z" fill="#fff"/></svg>
<svg style="position:absolute;left:756px;top:290.8px;" width="5.8" height="9.4" viewBox="0 0 6 10"><path d="M0 0.800 Q0 -0.300 0.900 0.400 L5.600 4.500 Q6.200 5 5.600 5.500 L0.900 9.600 Q0 10.300 0 9.200 Z" fill="#1e6fbf" /></svg>
<span id="t55" style="position:absolute;top:285.60px;font-size:15px;line-height:1;white-space:pre;color:#3a3c4a;right:960.50px;">0</span>
<span id="t56" style="position:absolute;top:285.60px;font-size:15px;line-height:1;white-space:pre;color:#3a3c4a;letter-spacing:-0.016px;right:798.02px;">368K</span>
<span id="t57" style="position:absolute;top:285.60px;font-size:15px;line-height:1;white-space:pre;color:#3a3c4a;letter-spacing:-0.401px;right:629.40px;">0,30</span>
<span id="t58" style="position:absolute;top:285.60px;font-size:15px;line-height:1;white-space:pre;color:#3a3c4a;right:429.00px;">1</span>
<span id="t59" style="position:absolute;top:285.60px;font-size:15px;line-height:1;white-space:pre;color:#3a3c4a;right:273.00px;">629M</span>
<svg style="position:absolute;left:1729.5px;top:286.8px;" width="13.8" height="16" viewBox="0 0 448 512"><path d="M447.8 153.6c-2 43.600-32.400 103.300-91.400 179.100-60.900 79.200-112.400 118.800-154.600 118.800-26.100 0-48.200-24.100-66.300-72.300C100.300 250 85.300 174.300 56.200 174.300c-3.400 0-15.100 7.100-35.200 21.100L0 168.200c51.600-45.300 100.900-95.700 131.800-98.500 34.900-3.400 56.300 20.500 64.400 71.500 28.700 181.500 41.400 208.900 93.600 126.700 18.700-29.600 28.800-52.100 30.200-67.600 4.800-45.900-35.800-42.800-63.300-31 22-72.100 64.100-107.100 126.200-105.100 45.800 1.200 67.500 31.100 64.900 89.400z" fill="#434b68" /></svg>
<svg style="position:absolute;left:1749.3px;top:288.0px;" width="13.8" height="13.8" viewBox="0 0 512 512"><path d="M459.37 151.716c.325 4.548.325 9.097.325 13.645 0 138.72-105.583 298.558-298.558 298.558-59.452 0-114.68-17.219-161.137-47.106 8.447.974 16.568 1.299 25.34 1.299 49.055 0 94.213-16.568 130.274-44.832-46.132-.975-84.792-31.188-98.112-72.772 6.498.974 12.995 1.624 19.818 1.624 9.421 0 18.843-1.3 27.614-3.573-48.081-9.747-84.143-51.98-84.143-102.985v-1.299c13.969 7.797 30.214 12.67 47.431 13.319-28.264-18.843-46.781-51.005-46.781-87.391 0-19.492 5.197-37.36 14.294-52.954 51.655 63.675 129.3 105.258 216.365 109.807-1.624-7.797-2.599-15.918-2.599-24.04 0-57.828 46.782-104.934 104.934-104.934 30.213 0 57.502 12.67 76.67 33.137 23.715-4.548 46.456-13.32 66.599-25.34-7.798 24.366-24.366 44.833-46.132 57.827 21.117-2.273 41.584-8.122 60.426-16.243-14.292 20.791-32.161 39.308-52.628 54.253z" fill="#434b68" /></svg>
<svg style="position:absolute;left:1770.2px;top:287.8px;" width="12.9" height="14.74" viewBox="0 0 448 512"><path d="M224.1 141c-63.6 0-114.9 51.3-114.9 114.9s51.3 114.9 114.9 114.9S339 319.5 339 255.9 287.7 141 224.1 141zm0 189.6c-41.1 0-74.7-33.5-74.7-74.7s33.5-74.7 74.7-74.7 74.7 33.5 74.7 74.7-33.6 74.7-74.7 74.7zm146.4-194.3c0 14.9-12 26.8-26.8 26.8-14.9 0-26.8-12-26.8-26.8s12-26.8 26.8-26.8 26.8 12 26.8 26.8zm76.1 27.2c-1.7-35.9-9.9-67.7-36.2-93.9-26.2-26.2-58-34.4-93.9-36.2-37-2.1-147.9-2.1-184.9 0-35.8 1.7-67.6 9.9-93.9 36.1s-34.4 58-36.2 93.9c-2.1 37-2.1 147.9 0 184.9 1.7 35.9 9.900 67.700 36.200 93.900s58 34.400 93.900 36.200c37 2.100 147.900 2.100 184.900 0 35.900-1.700 67.700-9.900 93.900-36.200 26.200-26.200 34.400-58 36.200-93.900 2.100-37 2.100-147.800 0-184.800zM398.800 388c-7.800 19.600-22.900 34.700-42.600 42.600-29.500 11.700-99.500 9-132.100 9s-102.700 2.600-132.100-9c-19.600-7.800-34.700-22.900-42.600-42.600-11.700-29.500-9-99.500-9-132.100s-2.600-102.700 9-132.100c7.800-19.600 22.900-34.700 42.600-42.600 29.500-11.700 99.500-9 132.100-9s102.700-2.600 132.100 9c19.600 7.800 34.700 22.900 42.600 42.600 11.700 29.500 9 99.500 9 132.100s2.700 102.700-9 132.100z" fill="#434b68" /></svg>
<svg style="position:absolute;left:1788.7px;top:286.8px;" width="16" height="16" viewBox="0 0 16 16"><text transform="translate(7.900 12.300) scale(1.07 1)" x="0" y="0" font-family="Liberation Serif, serif" font-size="14.200" text-anchor="middle" fill="#555c76">W</text></svg>
<svg style="position:absolute;left:1812.3px;top:287.40000000000003px;" width="8.6" height="14.9" viewBox="0 0 320 512"><path d="M279.14 288l14.22-92.66h-88.91v-60.13c0-25.35 12.42-50.06 52.24-50.06h40.42V6.26S260.43 0 225.36 0c-73.22 0-121.08 44.38-121.08 124.72v70.62H22.89V288h81.39v224h100.17V288z" fill="#434b68" /></svg>
<svg style="position:absolute;left:1828.8px;top:287.90000000000003px;" width="15.6" height="13.6" viewBox="0 0 576 512"><path d="M549.655 124.083c-6.281-23.65-24.787-42.276-48.284-48.597C458.781 64 288 64 288 64S117.22 64 74.629 75.486c-23.497 6.322-42.003 24.947-48.284 48.597-11.412 42.867-11.412 132.305-11.412 132.305s0 89.438 11.412 132.305c6.281 23.65 24.787 41.5 48.284 47.821C117.22 448 288 448 288 448s170.78 0 213.371-11.486c23.497-6.321 42.003-24.171 48.284-47.821 11.412-42.867 11.412-132.305 11.412-132.305s0-89.438-11.412-132.305zm-317.51 213.508V175.185l142.739 81.205-142.739 81.201z" fill="#1d1d22" /></svg>
<svg style="position:absolute;left:1847.7px;top:284.8px;" width="18" height="20" viewBox="0 0 18 20"><text x="8.800" y="14.100" font-family="Liberation Sans, sans-serif" font-weight="700" font-size="19" text-anchor="middle" fill="#434b68">a</text><path d="M1.600 15.200 Q8.200 19 14.600 15.800" fill="none" stroke="#434b68" stroke-width="1" stroke-linecap="round"/><path d="M13.300 15 L15.900 14.800 L15 17" fill="none" stroke="#434b68" stroke-width="0.750"/></svg>
<span id="t60" style="position:absolute;top:323.60px;font-size:15px;line-height:1;white-space:pre;color:#3a3c4a;left:300.00px;transform:translateX(-50%);margin-left:0.00px;">4</span>
<div style="position:absolute;left:339.2px;top:324.0px;width:14.7px;height:15.2px;border:1px solid #8c8d94;border-radius:2.5px;background:#fff"></div>
<span id="t61" style="position:absolute;top:323.60px;font-size:15px;line-height:1;white-space:pre;color:#2873b9;letter-spacing:0.068px;left:383.00px;">notebook the</span>
<div style="position:absolute;left:674px;top:320.2px;width:34.8px;height:24.6px;background:#1e6fbf;"></div>
<svg style="position:absolute;left:679.7px;top:322.4px;" width="24" height="20" viewBox="0 0 24 20"><path d="M3 0 H20.300 Q23.300 0 23.300 3 V13.300 Q23.300 16.300 20.300 16.300 H15.600 L12.300 19.700 L11.800 16.300 H3 Q0 16.300 0 13.300 V3 Q0 0 3 0 Z" fill="#fff"/><circle cx="7" cy="7.700" r="1.350" fill="#1e6fbf"/><circle cx="11.800" cy="7.700" r="1.350" fill="#1e6fbf"/><circle cx="16.600" cy="7.700" r="1.350" fill="#1e6fbf"/></svg>
<div style="position:absolute;left:711.2px;top:320.2px;width:34.8px;height:24.6px;background:#1e6fbf;"></div>
<svg style="position:absolute;left:717.8px;top:329.8px;" width="21.4" height="5.4" viewBox="0 0 21.4 5.4"><circle cx="2.7" cy="2.7" r="2.600" fill="#fff"/><circle cx="10.700" cy="2.7" r="2.600" fill="#fff"/><circle cx="18.700" cy="2.7" r="2.600" fill="#fff"/></svg>
<svg style="position:absolute;left:756px;top:328.1px;" width="5.8" height="9.4" viewBox="0 0 6 10"><path d="M0 0.800 Q0 -0.300 0.900 0.400 L5.600 4.500 Q6.200 5 5.600 5.500 L0.900 9.600 Q0 10.300 0 9.200 Z" fill="#1e6fbf" /></svg>
<span id="t62" style="position:absolute;top:323.60px;font-size:15px;line-height:1;white-space:pre;color:#3a3c4a;right:960.50px;">60</span>
<span id="t63" style="position:absolute;top:323.60px;font-size:15px;line-height:1;white-space:pre;color:#3a3c4a;letter-spacing:-0.016px;right:798.02px;">368K</span>
<span id="t64" style="position:absolute;top:323.60px;font-size:15px;line-height:1;white-space:pre;color:#3a3c4a;letter-spacing:-0.401px;right:629.40px;">0,30</span>
<span id="t65" style="position:absolute;top:323.60px;font-size:15px;line-height:1;white-space:pre;color:#3a3c4a;right:429.00px;">1</span>
<span id="t66" style="position:absolute;top:323.60px;font-size:15px;line-height:1;white-space:pre;color:#3a3c4a;right:273.00px;">1.2B</span>
<svg style="position:absolute;left:1807.7px;top:322.1px;" width="18" height="20" viewBox="0 0 18 20"><text x="8.800" y="14.100" font-family="Liberation Sans, sans-serif" font-weight="700" font-size="19" text-anchor="middle" fill="#434b68">a</text><path d="M1.600 15.200 Q8.200 19 14.600 15.800" fill="none" stroke="#434b68" stroke-width="1" stroke-linecap="round"/><path d="M13.300 15 L15.900 14.800 L15 17" fill="none" stroke="#434b68" stroke-width="0.750"/></svg>
<svg style="position:absolute;left:1832.3px;top:324.70000000000005px;" width="8.6" height="14.9" viewBox="0 0 320 512"><path d="M279.14 288l14.22-92.66h-88.91v-60.13c0-25.35 12.42-50.06 52.24-50.06h40.42V6.26S260.43 0 225.36 0c-73.22 0-121.08 44.38-121.08 124.72v70.62H22.89V288h81.39v224h100.17V288z" fill="#434b68" /></svg>
<svg style="position:absolute;left:1848.7px;top:324.1px;" width="16" height="16" viewBox="0 0 16 16"><text transform="translate(7.900 12.300) scale(1.07 1)" x="0" y="0" font-family="Liberation Serif, serif" font-size="14.200" text-anchor="middle" fill="#555c76">W</text></svg>
<span id="t67" style="position:absolute;top:360.60px;font-size:15px;line-height:1;white-space:pre;color:#3a3c4a;left:300.00px;transform:translateX(-50%);margin-left:0.00px;">5</span>
<div style="position:absolute;left:339.2px;top:361.2px;width:14.7px;height:15.2px;border:1px solid #8c8d94;border-radius:2.5px;background:#fff"></div>
<span id="t68" style="position:absolute;top:360.60px;font-size:15px;line-height:1;white-space:pre;color:#2873b9;letter-spacing:0.104px;left:383.00px;">the notebooks</span>
<div style="position:absolute;left:674px;top:358.0px;width:34.8px;height:24.6px;background:#1e6fbf;"></div>
<svg style="position:absolute;left:679px;top:359.3px;" width="26" height="23" viewBox="0 0 26 23"><path d="M1.600 7.600 L18.600 2 L20.300 7" fill="none" stroke="#fff" stroke-width="2" stroke-linejoin="round"/><path d="M1.800 8 L3.900 14.600" stroke="#fff" stroke-width="2"/><rect x="5.900" y="8.300" width="17.700" height="12.300" fill="none" stroke="#fff" stroke-width="2.200"/><path d="M8.200 18.600 L11.300 12.600 L13.800 16 L17 12.400 L21.300 18.600 Z" fill="#fff"/></svg>
<div style="position:absolute;left:711.2px;top:358.0px;width:34.8px;height:24.6px;background:#1e6fbf;"></div>
<svg style="position:absolute;left:717.8px;top:367.6px;" width="21.4" height="5.4" viewBox="0 0 21.4 5.4"><circle cx="2.7" cy="2.7" r="2.600" fill="#fff"/><circle cx="10.700" cy="2.7" r="2.600" fill="#fff"/><circle cx="18.700" cy="2.7" r="2.600" fill="#fff"/></svg>
<svg style="position:absolute;left:756px;top:365.8px;" width="5.8" height="9.4" viewBox="0 0 6 10"><path d="M0 0.800 Q0 -0.300 0.900 0.400 L5.600 4.500 Q6.200 5 5.600 5.500 L0.900 9.600 Q0 10.300 0 9.200 Z" fill="#1e6fbf" /></svg>
<span id="t69" style="position:absolute;top:360.60px;font-size:15px;line-height:1;white-space:pre;color:#3a3c4a;right:960.50px;">27</span>
<span id="t70" style="position:absolute;top:360.60px;font-size:15px;line-height:1;white-space:pre;color:#3a3c4a;letter-spacing:-0.016px;right:798.02px;">368K</span>
<span id="t71" style="position:absolute;top:360.60px;font-size:15px;line-height:1;white-space:pre;color:#3a3c4a;letter-spacing:-0.401px;right:629.40px;">0,30</span>
<span id="t72" style="position:absolute;top:360.60px;font-size:15px;line-height:1;white-space:pre;color:#3a3c4a;right:429.00px;">1</span>
<span id="t73" style="position:absolute;top:360.60px;font-size:15px;line-height:1;white-space:pre;color:#3a3c4a;right:273.00px;">281M</span>
<svg style="position:absolute;left:1787.7px;top:359.8px;" width="18" height="20" viewBox="0 0 18 20"><text x="8.800" y="14.100" font-family="Liberation Sans, sans-serif" font-weight="700" font-size="19" text-anchor="middle" fill="#434b68">a</text><path d="M1.600 15.200 Q8.200 19 14.600 15.800" fill="none" stroke="#434b68" stroke-width="1" stroke-linecap="round"/><path d="M13.300 15 L15.900 14.800 L15 17" fill="none" stroke="#434b68" stroke-width="0.750"/></svg>
<svg style="position:absolute;left:1812.3px;top:362.40000000000003px;" width="8.6" height="14.9" viewBox="0 0 320 512"><path d="M279.14 288l14.22-92.66h-88.91v-60.13c0-25.35 12.42-50.06 52.24-50.06h40.42V6.26S260.43 0 225.36 0c-73.22 0-121.08 44.38-121.08 124.72v70.62H22.89V288h81.39v224h100.17V288z" fill="#434b68" /></svg>
<svg style="position:absolute;left:1828.7px;top:361.8px;" width="16" height="16" viewBox="0 0 16 16"><text transform="translate(7.900 12.300) scale(1.07 1)" x="0" y="0" font-family="Liberation Serif, serif" font-size="14.200" text-anchor="middle" fill="#555c76">W</text></svg>
<svg style="position:absolute;left:1848.8px;top:362.90000000000003px;" width="15.6" height="13.6" viewBox="0 0 576 512"><path d="M549.655 124.083c-6.281-23.65-24.787-42.276-48.284-48.597C458.781 64 288 64 288 64S117.22 64 74.629 75.486c-23.497 6.322-42.003 24.947-48.284 48.597-11.412 42.867-11.412 132.305-11.412 132.305s0 89.438 11.412 132.305c6.281 23.65 24.787 41.5 48.284 47.821C117.22 448 288 448 288 448s170.78 0 213.371-11.486c23.497-6.321 42.003-24.171 48.284-47.821 11.412-42.867 11.412-132.305 11.412-132.305s0-89.438-11.412-132.305zm-317.51 213.508V175.185l142.739 81.205-142.739 81.201z" fill="#1d1d22" /></svg>
<span id="t74" style="position:absolute;top:398.60px;font-size:15px;line-height:1;white-space:pre;color:#3a3c4a;left:300.00px;transform:translateX(-50%);margin-left:0.00px;">6</span>
<div style="position:absolute;left:339.2px;top:399.0px;width:14.7px;height:15.2px;border:1px solid #8c8d94;border-radius:2.5px;background:#fff"></div>
<span id="t75" style="position:absolute;top:398.60px;font-size:15px;line-height:1;white-space:pre;color:#2873b9;letter-spacing:0.145px;left:383.00px;">thr notebook</span>
<svg style="position:absolute;left:480.1px;top:397.7px;" width="23" height="20.2" viewBox="0 0 576 512"><path d="M569.517 440.013C587.975 472.007 564.806 512 527.940 512H48.054c-36.937 0-59.999-40.055-41.577-71.987L246.423 23.985c18.467-32.009 64.720-31.951 83.154 0l239.940 416.028zM288 354c-25.405 0-46 20.595-46 46s20.595 46 46 46 46-20.595 46-46-20.595-46-46-46zm-43.673-165.346l7.418 136c.347 6.364 5.609 11.346 11.982 11.346h48.546c6.373 0 11.635-4.982 11.982-11.346l7.418-136c.375-6.874-5.098-12.654-11.982-12.654h-63.383c-6.884 0-12.356 5.780-11.981 12.654z" fill="#f89c31" /></svg>
<div style="position:absolute;left:711.2px;top:395.2px;width:34.8px;height:24.6px;background:#1e6fbf;"></div>
<svg style="position:absolute;left:728.8000000000001px;top:403.2px;" width="8" height="9" viewBox="0 0 8 9"><rect x="0" y="0" width="7.600" height="1.800" fill="#fff"/><rect x="0" y="3.400" width="5.700" height="1.800" fill="#fff"/><rect x="0" y="6.800" width="3" height="1.800" fill="#fff"/></svg>
<svg style="position:absolute;left:756px;top:403.1px;" width="5.8" height="9.4" viewBox="0 0 6 10"><path d="M0 0.800 Q0 -0.300 0.900 0.400 L5.600 4.500 Q6.200 5 5.600 5.500 L0.900 9.600 Q0 10.300 0 9.200 Z" fill="#1e6fbf" /></svg>
<span id="t76" style="position:absolute;top:398.60px;font-size:15px;line-height:1;white-space:pre;color:#3a3c4a;right:960.50px;">0</span>
<span id="t77" style="position:absolute;top:398.60px;font-size:15px;line-height:1;white-space:pre;color:#3a3c4a;letter-spacing:-0.016px;right:798.02px;">368K</span>
<span id="t78" style="position:absolute;top:398.60px;font-size:15px;line-height:1;white-space:pre;color:#3a3c4a;letter-spacing:-0.401px;right:629.40px;">0,30</span>
<span id="t79" style="position:absolute;top:398.60px;font-size:15px;line-height:1;white-space:pre;color:#3a3c4a;right:429.00px;">1</span>
<span id="t80" style="position:absolute;top:398.60px;font-size:15px;line-height:1;white-space:pre;color:#3a3c4a;right:273.00px;">777M</span>
<svg style="position:absolute;left:1709.5px;top:399.1px;" width="13.8" height="16" viewBox="0 0 448 512"><path d="M447.8 153.6c-2 43.600-32.400 103.300-91.400 179.100-60.900 79.200-112.400 118.800-154.600 118.800-26.100 0-48.200-24.100-66.300-72.300C100.300 250 85.300 174.300 56.200 174.300c-3.400 0-15.100 7.100-35.200 21.100L0 168.200c51.600-45.300 100.900-95.700 131.800-98.500 34.900-3.400 56.300 20.500 64.400 71.500 28.700 181.500 41.400 208.900 93.600 126.700 18.700-29.600 28.800-52.100 30.200-67.600 4.800-45.900-35.800-42.800-63.300-31 22-72.100 64.100-107.100 126.200-105.100 45.800 1.200 67.500 31.100 64.900 89.400z" fill="#434b68" /></svg>
<svg style="position:absolute;left:1728.7px;top:399.1px;" width="16" height="16" viewBox="0 0 16 16"><text transform="translate(7.900 12.300) scale(1.07 1)" x="0" y="0" font-family="Liberation Serif, serif" font-size="14.200" text-anchor="middle" fill="#555c76">W</text></svg>
<svg style="position:absolute;left:1750.2px;top:400.1px;" width="12.9" height="14.74" viewBox="0 0 448 512"><path d="M224.1 141c-63.6 0-114.9 51.3-114.9 114.9s51.3 114.9 114.9 114.9S339 319.5 339 255.9 287.7 141 224.1 141zm0 189.6c-41.1 0-74.7-33.5-74.7-74.7s33.5-74.7 74.7-74.7 74.7 33.5 74.7 74.7-33.6 74.7-74.7 74.7zm146.4-194.3c0 14.9-12 26.8-26.8 26.8-14.9 0-26.8-12-26.8-26.8s12-26.8 26.8-26.8 26.8 12 26.8 26.8zm76.1 27.2c-1.7-35.9-9.9-67.7-36.2-93.9-26.2-26.2-58-34.4-93.9-36.2-37-2.1-147.9-2.1-184.9 0-35.8 1.7-67.6 9.9-93.9 36.1s-34.4 58-36.2 93.9c-2.1 37-2.1 147.9 0 184.9 1.7 35.9 9.900 67.700 36.200 93.900s58 34.400 93.900 36.200c37 2.100 147.900 2.100 184.900 0 35.900-1.700 67.700-9.900 93.900-36.200 26.200-26.200 34.400-58 36.200-93.900 2.100-37 2.100-147.800 0-184.800zM398.800 388c-7.800 19.600-22.900 34.700-42.600 42.600-29.500 11.700-99.500 9-132.100 9s-102.700 2.600-132.100-9c-19.600-7.800-34.700-22.900-42.600-42.600-11.700-29.500-9-99.500-9-132.100s-2.600-102.700 9-132.100c7.800-19.600 22.900-34.700 42.600-42.600 29.500-11.700 99.500-9 132.100-9s102.700-2.600 132.100 9c19.600 7.800 34.700 22.900 42.600 42.600 11.700 29.500 9 99.500 9 132.100s2.700 102.700-9 132.100z" fill="#434b68" /></svg>
<svg style="position:absolute;left:1770.1000000000001px;top:400.3px;" width="13.2" height="13.6" viewBox="0 0 496 512"><path d="M496 256c0 137-111 248-248 248-25.600 0-50.200-3.900-73.400-11.100 10.100-16.500 25.200-43.500 30.800-65 3-11.600 15.400-59 15.400-59 8.100 15.400 31.700 28.500 56.800 28.500 74.800 0 128.700-68.800 128.700-154.300 0-81.900-66.900-143.200-152.900-143.200-107 0-163.900 71.800-163.900 150.100 0 36.400 19.400 81.700 50.300 96.100 4.700 2.200 7.200 1.200 8.300-3.300.8-3.400 5-20.300 6.900-28.100.6-2.500.3-4.700-1.700-7.100-10.100-12.500-18.300-35.300-18.300-56.600 0-54.700 41.400-107.600 112-107.600 60.900 0 103.600 41.500 103.600 100.900 0 67.100-33.900 113.600-78 113.600-24.300 0-42.600-20.100-36.700-44.800 7-29.500 20.500-61.300 20.500-82.600 0-19-10.200-34.900-31.400-34.900-24.900 0-44.900 25.700-44.900 60.200 0 22 7.400 36.800 7.400 36.800s-24.500 103.800-29 123.200c-5 21.400-3 51.600-.9 71.200C65.400 450.900 0 361.100 0 256 0 119 111 8 248 8s248 111 248 248z" fill="#434b68" /></svg>
<svg style="position:absolute;left:1787.7px;top:397.1px;" width="18" height="20" viewBox="0 0 18 20"><text x="8.800" y="14.100" font-family="Liberation Sans, sans-serif" font-weight="700" font-size="19" text-anchor="middle" fill="#434b68">a</text><path d="M1.600 15.200 Q8.200 19 14.600 15.800" fill="none" stroke="#434b68" stroke-width="1" stroke-linecap="round"/><path d="M13.300 15 L15.900 14.800 L15 17" fill="none" stroke="#434b68" stroke-width="0.750"/></svg>
<svg style="position:absolute;left:1808.8px;top:400.20000000000005px;" width="15.6" height="13.6" viewBox="0 0 576 512"><path d="M549.655 124.083c-6.281-23.65-24.787-42.276-48.284-48.597C458.781 64 288 64 288 64S117.22 64 74.629 75.486c-23.497 6.322-42.003 24.947-48.284 48.597-11.412 42.867-11.412 132.305-11.412 132.305s0 89.438 11.412 132.305c6.281 23.65 24.787 41.5 48.284 47.821C117.22 448 288 448 288 448s170.78 0 213.371-11.486c23.497-6.321 42.003-24.171 48.284-47.821 11.412-42.867 11.412-132.305 11.412-132.305s0-89.438-11.412-132.305zm-317.51 213.508V175.185l142.739 81.205-142.739 81.201z" fill="#1d1d22" /></svg>
<svg style="position:absolute;left:1832.3px;top:399.70000000000005px;" width="8.6" height="14.9" viewBox="0 0 320 512"><path d="M279.14 288l14.22-92.66h-88.91v-60.13c0-25.35 12.42-50.06 52.24-50.06h40.42V6.26S260.43 0 225.36 0c-73.22 0-121.08 44.38-121.08 124.72v70.62H22.89V288h81.39v224h100.17V288z" fill="#434b68" /></svg>
<svg style="position:absolute;left:1849.3px;top:400.3px;" width="13.8" height="13.8" viewBox="0 0 512 512"><path d="M459.37 151.716c.325 4.548.325 9.097.325 13.645 0 138.72-105.583 298.558-298.558 298.558-59.452 0-114.68-17.219-161.137-47.106 8.447.974 16.568 1.299 25.34 1.299 49.055 0 94.213-16.568 130.274-44.832-46.132-.975-84.792-31.188-98.112-72.772 6.498.974 12.995 1.624 19.818 1.624 9.421 0 18.843-1.3 27.614-3.573-48.081-9.747-84.143-51.98-84.143-102.985v-1.299c13.969 7.797 30.214 12.67 47.431 13.319-28.264-18.843-46.781-51.005-46.781-87.391 0-19.492 5.197-37.36 14.294-52.954 51.655 63.675 129.3 105.258 216.365 109.807-1.624-7.797-2.599-15.918-2.599-24.04 0-57.828 46.782-104.934 104.934-104.934 30.213 0 57.502 12.67 76.67 33.137 23.715-4.548 46.456-13.32 66.599-25.34-7.798 24.366-24.366 44.833-46.132 57.827 21.117-2.273 41.584-8.122 60.426-16.243-14.292 20.791-32.161 39.308-52.628 54.253z" fill="#434b68" /></svg>
<span id="t81" style="position:absolute;top:435.60px;font-size:15px;line-height:1;white-space:pre;color:#3a3c4a;left:300.00px;transform:translateX(-50%);margin-left:0.00px;">7</span>
<div style="position:absolute;left:339.2px;top:436.2px;width:14.7px;height:15.2px;border:1px solid #8c8d94;border-radius:2.5px;background:#fff"></div>
<span id="t82" style="position:absolute;top:435.60px;font-size:15px;line-height:1;white-space:pre;color:#2873b9;letter-spacing:-0.030px;left:383.00px;">the notebook""</span>
<div style="position:absolute;left:674px;top:433.0px;width:34.8px;height:24.6px;background:#1e6fbf;"></div>
<svg style="position:absolute;left:686.2px;top:438.40000000000003px;" width="11" height="11" viewBox="0 0 11 11"><circle cx="5.500" cy="5.500" r="5.300" fill="#fff"/><text x="5.500" y="8.8" font-family="Liberation Sans, sans-serif" font-weight="700" font-size="9" text-anchor="middle" fill="#1e6fbf">?</text></svg>
<div style="position:absolute;left:711.2px;top:433.0px;width:34.8px;height:24.6px;background:#1e6fbf;"></div>
<svg style="position:absolute;left:717.8px;top:442.6px;" width="21.4" height="5.4" viewBox="0 0 21.4 5.4"><circle cx="2.7" cy="2.7" r="2.600" fill="#fff"/><circle cx="10.700" cy="2.7" r="2.600" fill="#fff"/><circle cx="18.700" cy="2.7" r="2.600" fill="#fff"/></svg>
<svg style="position:absolute;left:756px;top:440.8px;" width="5.8" height="9.4" viewBox="0 0 6 10"><path d="M0 0.800 Q0 -0.300 0.900 0.400 L5.600 4.500 Q6.200 5 5.600 5.500 L0.900 9.600 Q0 10.300 0 9.200 Z" fill="#1e6fbf" /></svg>
<span id="t83" style="position:absolute;top:435.60px;font-size:15px;line-height:1;white-space:pre;color:#3a3c4a;right:960.50px;">0</span>
<span id="t84" style="position:absolute;top:435.60px;font-size:15px;line-height:1;white-space:pre;color:#3a3c4a;letter-spacing:-0.016px;right:798.02px;">368K</span>
<span id="t85" style="position:absolute;top:435.60px;font-size:15px;line-height:1;white-space:pre;color:#3a3c4a;letter-spacing:-0.401px;right:629.40px;">0,30</span>
<span id="t86" style="position:absolute;top:435.60px;font-size:15px;line-height:1;white-space:pre;color:#3a3c4a;right:429.00px;">1</span>
<span id="t87" style="position:absolute;top:435.60px;font-size:15px;line-height:1;white-space:pre;color:#3a3c4a;right:273.00px;">2B</span>
<svg style="position:absolute;left:1769.3px;top:438.0px;" width="13.8" height="13.8" viewBox="0 0 512 512"><path d="M459.37 151.716c.325 4.548.325 9.097.325 13.645 0 138.72-105.583 298.558-298.558 298.558-59.452 0-114.68-17.219-161.137-47.106 8.447.974 16.568 1.299 25.34 1.299 49.055 0 94.213-16.568 130.274-44.832-46.132-.975-84.792-31.188-98.112-72.772 6.498.974 12.995 1.624 19.818 1.624 9.421 0 18.843-1.3 27.614-3.573-48.081-9.747-84.143-51.98-84.143-102.985v-1.299c13.969 7.797 30.214 12.67 47.431 13.319-28.264-18.843-46.781-51.005-46.781-87.391 0-19.492 5.197-37.36 14.294-52.954 51.655 63.675 129.3 105.258 216.365 109.807-1.624-7.797-2.599-15.918-2.599-24.04 0-57.828 46.782-104.934 104.934-104.934 30.213 0 57.502 12.67 76.67 33.137 23.715-4.548 46.456-13.32 66.599-25.34-7.798 24.366-24.366 44.833-46.132 57.827 21.117-2.273 41.584-8.122 60.426-16.243-14.292 20.791-32.161 39.308-52.628 54.253z" fill="#434b68" /></svg>
<svg style="position:absolute;left:1787.7px;top:434.8px;" width="18" height="20" viewBox="0 0 18 20"><text x="8.800" y="14.100" font-family="Liberation Sans, sans-serif" font-weight="700" font-size="19" text-anchor="middle" fill="#434b68">a</text><path d="M1.600 15.200 Q8.200 19 14.600 15.800" fill="none" stroke="#434b68" stroke-width="1" stroke-linecap="round"/><path d="M13.300 15 L15.900 14.800 L15 17" fill="none" stroke="#434b68" stroke-width="0.750"/></svg>
<svg style="position:absolute;left:1808.7px;top:436.8px;" width="16" height="16" viewBox="0 0 16 16"><text transform="translate(7.900 12.300) scale(1.07 1)" x="0" y="0" font-family="Liberation Serif, serif" font-size="14.200" text-anchor="middle" fill="#555c76">W</text></svg>
<svg style="position:absolute;left:1830.2px;top:437.8px;" width="12.9" height="14.74" viewBox="0 0 448 512"><path d="M224.1 141c-63.6 0-114.9 51.3-114.9 114.9s51.3 114.9 114.9 114.9S339 319.5 339 255.9 287.7 141 224.1 141zm0 189.6c-41.1 0-74.7-33.5-74.7-74.7s33.5-74.7 74.7-74.7 74.7 33.5 74.7 74.7-33.6 74.7-74.7 74.7zm146.4-194.3c0 14.9-12 26.8-26.8 26.8-14.9 0-26.8-12-26.8-26.8s12-26.8 26.8-26.8 26.8 12 26.8 26.8zm76.1 27.2c-1.7-35.9-9.9-67.7-36.2-93.9-26.2-26.2-58-34.4-93.9-36.2-37-2.1-147.9-2.1-184.9 0-35.8 1.7-67.6 9.9-93.9 36.1s-34.4 58-36.2 93.9c-2.1 37-2.1 147.9 0 184.9 1.7 35.9 9.900 67.700 36.200 93.900s58 34.400 93.900 36.200c37 2.100 147.900 2.100 184.900 0 35.900-1.700 67.700-9.900 93.900-36.200 26.200-26.200 34.400-58 36.200-93.900 2.100-37 2.100-147.800 0-184.800zM398.800 388c-7.800 19.600-22.900 34.700-42.600 42.600-29.500 11.700-99.500 9-132.100 9s-102.700 2.600-132.100-9c-19.600-7.800-34.700-22.900-42.600-42.600-11.700-29.500-9-99.500-9-132.100s-2.600-102.700 9-132.100c7.800-19.600 22.900-34.700 42.600-42.600 29.500-11.700 99.500-9 132.100-9s102.700-2.600 132.100 9c19.600 7.800 34.700 22.900 42.600 42.600 11.700 29.500 9 99.500 9 132.100s2.700 102.700-9 132.100z" fill="#434b68" /></svg>
<svg style="position:absolute;left:1852.3px;top:437.40000000000003px;" width="8.6" height="14.9" viewBox="0 0 320 512"><path d="M279.14 288l14.22-92.66h-88.91v-60.13c0-25.35 12.42-50.06 52.24-50.06h40.42V6.26S260.43 0 225.36 0c-73.22 0-121.08 44.38-121.08 124.72v70.62H22.89V288h81.39v224h100.17V288z" fill="#434b68" /></svg>
<span id="t88" style="position:absolute;top:473.60px;font-size:15px;line-height:1;white-space:pre;color:#3a3c4a;left:300.00px;transform:translateX(-50%);margin-left:0.00px;">8</span>
<div style="position:absolute;left:339.2px;top:474.0px;width:14.7px;height:15.2px;border:1px solid #8c8d94;border-radius:2.5px;background:#fff"></div>
<span id="t89" style="position:absolute;top:473.60px;font-size:15px;line-height:1;white-space:pre;color:#2873b9;letter-spacing:0.049px;left:383.00px;">the the notebook</span>
<div style="position:absolute;left:674px;top:470.2px;width:34.8px;height:24.6px;background:#1e6fbf;"></div>
<svg style="position:absolute;left:679.7px;top:476.2px;" width="24" height="12.6" viewBox="0 0 24 12.6"><rect x="0" y="0" width="17.600" height="12.600" rx="1.800" fill="#fff"/><path d="M18.800 4.200 L22 1.900 Q23.300 1.300 23.300 2.700 V9.900 Q23.300 11.300 22 10.700 L18.800 8.400 Z" fill="#fff"/></svg>
<div style="position:absolute;left:711.2px;top:470.2px;width:34.8px;height:24.6px;background:#1e6fbf;"></div>
<svg style="position:absolute;left:717.8px;top:479.8px;" width="21.4" height="5.4" viewBox="0 0 21.4 5.4"><circle cx="2.7" cy="2.7" r="2.600" fill="#fff"/><circle cx="10.700" cy="2.7" r="2.600" fill="#fff"/><circle cx="18.700" cy="2.7" r="2.600" fill="#fff"/></svg>
<svg style="position:absolute;left:756px;top:478.1px;" width="5.8" height="9.4" viewBox="0 0 6 10"><path d="M0 0.800 Q0 -0.300 0.900 0.400 L5.600 4.500 Q6.200 5 5.600 5.500 L0.900 9.600 Q0 10.300 0 9.200 Z" fill="#1e6fbf" /></svg>
<span id="t90" style="position:absolute;top:473.60px;font-size:15px;line-height:1;white-space:pre;color:#3a3c4a;right:960.50px;">58</span>
<span id="t91" style="position:absolute;top:473.60px;font-size:15px;line-height:1;white-space:pre;color:#3a3c4a;letter-spacing:-0.016px;right:798.02px;">368K</span>
<span id="t92" style="position:absolute;top:473.60px;font-size:15px;line-height:1;white-space:pre;color:#3a3c4a;letter-spacing:-0.401px;right:629.40px;">0,30</span>
<span id="t93" style="position:absolute;top:473.60px;font-size:15px;line-height:1;white-space:pre;color:#3a3c4a;right:429.00px;">1</span>
<span id="t94" style="position:absolute;top:473.60px;font-size:15px;line-height:1;white-space:pre;color:#3a3c4a;right:273.00px;">1.2B</span>
<svg style="position:absolute;left:1752.3px;top:474.70000000000005px;" width="8.6" height="14.9" viewBox="0 0 320 512"><path d="M279.14 288l14.22-92.66h-88.91v-60.13c0-25.35 12.42-50.06 52.24-50.06h40.42V6.26S260.43 0 225.36 0c-73.22 0-121.08 44.38-121.08 124.72v70.62H22.89V288h81.39v224h100.17V288z" fill="#434b68" /></svg>
<svg style="position:absolute;left:1770.2px;top:475.1px;" width="12.9" height="14.74" viewBox="0 0 448 512"><path d="M224.1 141c-63.6 0-114.9 51.3-114.9 114.9s51.3 114.9 114.9 114.9S339 319.5 339 255.9 287.7 141 224.1 141zm0 189.6c-41.1 0-74.7-33.5-74.7-74.7s33.5-74.7 74.7-74.7 74.7 33.5 74.7 74.7-33.6 74.7-74.7 74.7zm146.4-194.3c0 14.9-12 26.8-26.8 26.8-14.9 0-26.8-12-26.8-26.8s12-26.8 26.8-26.8 26.8 12 26.8 26.8zm76.1 27.2c-1.7-35.9-9.9-67.7-36.2-93.9-26.2-26.2-58-34.4-93.9-36.2-37-2.1-147.9-2.1-184.9 0-35.8 1.7-67.6 9.9-93.9 36.1s-34.4 58-36.2 93.9c-2.1 37-2.1 147.9 0 184.9 1.7 35.9 9.900 67.700 36.200 93.900s58 34.400 93.900 36.200c37 2.100 147.900 2.100 184.900 0 35.900-1.700 67.700-9.900 93.900-36.200 26.200-26.200 34.400-58 36.200-93.900 2.100-37 2.100-147.800 0-184.800zM398.800 388c-7.800 19.600-22.900 34.700-42.600 42.600-29.500 11.700-99.500 9-132.100 9s-102.700 2.600-132.100-9c-19.600-7.800-34.700-22.900-42.600-42.600-11.700-29.500-9-99.500-9-132.100s-2.600-102.700 9-132.100c7.800-19.600 22.900-34.700 42.600-42.600 29.500-11.700 99.500-9 132.100-9s102.700-2.600 132.100 9c19.600 7.800 34.700 22.900 42.600 42.600 11.700 29.500 9 99.500 9 132.100s2.700 102.700-9 132.100z" fill="#434b68" /></svg>
<svg style="position:absolute;left:1787.7px;top:472.1px;" width="18" height="20" viewBox="0 0 18 20"><text x="8.800" y="14.100" font-family="Liberation Sans, sans-serif" font-weight="700" font-size="19" text-anchor="middle" fill="#434b68">a</text><path d="M1.600 15.200 Q8.200 19 14.600 15.800" fill="none" stroke="#434b68" stroke-width="1" stroke-linecap="round"/><path d="M13.300 15 L15.900 14.800 L15 17" fill="none" stroke="#434b68" stroke-width="0.750"/></svg>
<svg style="position:absolute;left:1809.3px;top:475.3px;" width="13.8" height="13.8" viewBox="0 0 512 512"><path d="M459.37 151.716c.325 4.548.325 9.097.325 13.645 0 138.72-105.583 298.558-298.558 298.558-59.452 0-114.68-17.219-161.137-47.106 8.447.974 16.568 1.299 25.34 1.299 49.055 0 94.213-16.568 130.274-44.832-46.132-.975-84.792-31.188-98.112-72.772 6.498.974 12.995 1.624 19.818 1.624 9.421 0 18.843-1.3 27.614-3.573-48.081-9.747-84.143-51.98-84.143-102.985v-1.299c13.969 7.797 30.214 12.67 47.431 13.319-28.264-18.843-46.781-51.005-46.781-87.391 0-19.492 5.197-37.36 14.294-52.954 51.655 63.675 129.3 105.258 216.365 109.807-1.624-7.797-2.599-15.918-2.599-24.04 0-57.828 46.782-104.934 104.934-104.934 30.213 0 57.502 12.67 76.67 33.137 23.715-4.548 46.456-13.32 66.599-25.34-7.798 24.366-24.366 44.833-46.132 57.827 21.117-2.273 41.584-8.122 60.426-16.243-14.292 20.791-32.161 39.308-52.628 54.253z" fill="#434b68" /></svg>
<svg style="position:absolute;left:1830.1000000000001px;top:475.3px;" width="13.2" height="13.6" viewBox="0 0 496 512"><path d="M496 256c0 137-111 248-248 248-25.600 0-50.200-3.900-73.400-11.100 10.100-16.500 25.200-43.500 30.800-65 3-11.600 15.400-59 15.400-59 8.100 15.400 31.700 28.500 56.800 28.500 74.800 0 128.700-68.800 128.700-154.300 0-81.900-66.900-143.200-152.900-143.200-107 0-163.900 71.800-163.900 150.100 0 36.400 19.400 81.700 50.300 96.100 4.700 2.200 7.200 1.200 8.300-3.300.8-3.400 5-20.300 6.900-28.100.6-2.500.3-4.700-1.700-7.100-10.100-12.500-18.300-35.300-18.300-56.600 0-54.700 41.400-107.600 112-107.600 60.900 0 103.600 41.500 103.600 100.900 0 67.100-33.900 113.600-78 113.600-24.300 0-42.600-20.100-36.700-44.800 7-29.500 20.500-61.300 20.500-82.600 0-19-10.200-34.900-31.400-34.900-24.900 0-44.900 25.700-44.900 60.200 0 22 7.400 36.800 7.400 36.800s-24.500 103.800-29 123.200c-5 21.400-3 51.600-.9 71.200C65.400 450.900 0 361.100 0 256 0 119 111 8 248 8s248 111 248 248z" fill="#434b68" /></svg>
<svg style="position:absolute;left:1848.7px;top:474.1px;" width="16" height="16" viewBox="0 0 16 16"><text transform="translate(7.900 12.300) scale(1.07 1)" x="0" y="0" font-family="Liberation Serif, serif" font-size="14.200" text-anchor="middle" fill="#555c76">W</text></svg>
<span id="t95" style="position:absolute;top:510.60px;font-size:15px;line-height:1;white-space:pre;color:#3a3c4a;left:300.00px;transform:translateX(-50%);margin-left:0.00px;">9</span>
<div style="position:absolute;left:339.2px;top:511.2px;width:14.7px;height:15.2px;border:1px solid #8c8d94;border-radius:2.5px;background:#fff"></div>
<span id="t96" style="position:absolute;top:510.60px;font-size:15px;line-height:1;white-space:pre;color:#2873b9;letter-spacing:0.076px;left:383.00px;">tghe notebook</span>
<svg style="position:absolute;left:491.1px;top:510.4px;" width="23" height="20.2" viewBox="0 0 576 512"><path d="M569.517 440.013C587.975 472.007 564.806 512 527.940 512H48.054c-36.937 0-59.999-40.055-41.577-71.987L246.423 23.985c18.467-32.009 64.720-31.951 83.154 0l239.940 416.028zM288 354c-25.405 0-46 20.595-46 46s20.595 46 46 46 46-20.595 46-46-20.595-46-46-46zm-43.673-165.346l7.418 136c.347 6.364 5.609 11.346 11.982 11.346h48.546c6.373 0 11.635-4.982 11.982-11.346l7.418-136c.375-6.874-5.098-12.654-11.982-12.654h-63.383c-6.884 0-12.356 5.780-11.981 12.654z" fill="#f89c31" /></svg>
<div style="position:absolute;left:674px;top:508.0px;width:34.8px;height:24.6px;background:#1e6fbf;"></div>
<svg style="position:absolute;left:680px;top:510.59999999999997px;" width="24" height="19" viewBox="0 0 24 19"><path d="M0 0 H17.300 V18.600 H2.500 Q0 18.600 0 16 Z" fill="#fff"/><rect x="3.200" y="4.100" width="9.300" height="1.600" fill="#1e6fbf"/><rect x="3.200" y="8.400" width="11.200" height="1.600" fill="#1e6fbf"/><rect x="3.200" y="12.700" width="7.400" height="1.600" fill="#1e6fbf"/><path d="M19.600 4.600 H23 V16.400 Q23 18.600 21 18.600 H19.600 Z" fill="#fff"/></svg>
<div style="position:absolute;left:711.2px;top:508.0px;width:34.8px;height:24.6px;background:#1e6fbf;"></div>
<svg style="position:absolute;left:717.8px;top:517.5999999999999px;" width="21.4" height="5.4" viewBox="0 0 21.4 5.4"><circle cx="2.7" cy="2.7" r="2.600" fill="#fff"/><circle cx="10.700" cy="2.7" r="2.600" fill="#fff"/><circle cx="18.700" cy="2.7" r="2.600" fill="#fff"/></svg>
<svg style="position:absolute;left:756px;top:515.8px;" width="5.8" height="9.4" viewBox="0 0 6 10"><path d="M0 0.800 Q0 -0.300 0.900 0.400 L5.600 4.500 Q6.200 5 5.600 5.500 L0.900 9.600 Q0 10.300 0 9.200 Z" fill="#1e6fbf" /></svg>
<span id="t97" style="position:absolute;top:510.60px;font-size:15px;line-height:1;white-space:pre;color:#3a3c4a;right:960.50px;">1</span>
<span id="t98" style="position:absolute;top:510.60px;font-size:15px;line-height:1;white-space:pre;color:#3a3c4a;letter-spacing:-0.016px;right:798.02px;">368K</span>
<span id="t99" style="position:absolute;top:510.60px;font-size:15px;line-height:1;white-space:pre;color:#3a3c4a;letter-spacing:-0.401px;right:629.40px;">0,30</span>
<span id="t100" style="position:absolute;top:510.60px;font-size:15px;line-height:1;white-space:pre;color:#3a3c4a;right:429.00px;">1</span>
<span id="t101" style="position:absolute;top:510.60px;font-size:15px;line-height:1;white-space:pre;color:#3a3c4a;right:273.00px;">731M</span>
<svg style="position:absolute;left:1748.8px;top:512.9px;" width="15.6" height="13.6" viewBox="0 0 576 512"><path d="M549.655 124.083c-6.281-23.65-24.787-42.276-48.284-48.597C458.781 64 288 64 288 64S117.22 64 74.629 75.486c-23.497 6.322-42.003 24.947-48.284 48.597-11.412 42.867-11.412 132.305-11.412 132.305s0 89.438 11.412 132.305c6.281 23.65 24.787 41.5 48.284 47.821C117.22 448 288 448 288 448s170.78 0 213.371-11.486c23.497-6.321 42.003-24.171 48.284-47.821 11.412-42.867 11.412-132.305 11.412-132.305s0-89.438-11.412-132.305zm-317.51 213.508V175.185l142.739 81.205-142.739 81.201z" fill="#1d1d22" /></svg>
<svg style="position:absolute;left:1769.3px;top:513.0px;" width="13.8" height="13.8" viewBox="0 0 512 512"><path d="M459.37 151.716c.325 4.548.325 9.097.325 13.645 0 138.72-105.583 298.558-298.558 298.558-59.452 0-114.68-17.219-161.137-47.106 8.447.974 16.568 1.299 25.34 1.299 49.055 0 94.213-16.568 130.274-44.832-46.132-.975-84.792-31.188-98.112-72.772 6.498.974 12.995 1.624 19.818 1.624 9.421 0 18.843-1.3 27.614-3.573-48.081-9.747-84.143-51.98-84.143-102.985v-1.299c13.969 7.797 30.214 12.67 47.431 13.319-28.264-18.843-46.781-51.005-46.781-87.391 0-19.492 5.197-37.36 14.294-52.954 51.655 63.675 129.3 105.258 216.365 109.807-1.624-7.797-2.599-15.918-2.599-24.04 0-57.828 46.782-104.934 104.934-104.934 30.213 0 57.502 12.67 76.67 33.137 23.715-4.548 46.456-13.32 66.599-25.34-7.798 24.366-24.366 44.833-46.132 57.827 21.117-2.273 41.584-8.122 60.426-16.243-14.292 20.791-32.161 39.308-52.628 54.253z" fill="#434b68" /></svg>
<svg style="position:absolute;left:1788.7px;top:511.79999999999995px;" width="16" height="16" viewBox="0 0 16 16"><text transform="translate(7.900 12.300) scale(1.07 1)" x="0" y="0" font-family="Liberation Serif, serif" font-size="14.200" text-anchor="middle" fill="#555c76">W</text></svg>
<svg style="position:absolute;left:1807.7px;top:509.79999999999995px;" width="18" height="20" viewBox="0 0 18 20"><text x="8.800" y="14.100" font-family="Liberation Sans, sans-serif" font-weight="700" font-size="19" text-anchor="middle" fill="#434b68">a</text><path d="M1.600 15.200 Q8.200 19 14.600 15.800" fill="none" stroke="#434b68" stroke-width="1" stroke-linecap="round"/><path d="M13.300 15 L15.900 14.800 L15 17" fill="none" stroke="#434b68" stroke-width="0.750"/></svg>
<svg style="position:absolute;left:1830.2px;top:512.8px;" width="12.9" height="14.74" viewBox="0 0 448 512"><path d="M224.1 141c-63.6 0-114.9 51.3-114.9 114.9s51.3 114.9 114.9 114.9S339 319.5 339 255.9 287.7 141 224.1 141zm0 189.6c-41.1 0-74.7-33.5-74.7-74.7s33.5-74.7 74.7-74.7 74.7 33.5 74.7 74.7-33.6 74.7-74.7 74.7zm146.4-194.3c0 14.9-12 26.8-26.8 26.8-14.9 0-26.8-12-26.8-26.8s12-26.8 26.8-26.8 26.8 12 26.8 26.8zm76.1 27.2c-1.7-35.9-9.9-67.7-36.2-93.9-26.2-26.2-58-34.4-93.9-36.2-37-2.1-147.9-2.1-184.9 0-35.8 1.7-67.6 9.9-93.9 36.1s-34.4 58-36.2 93.9c-2.1 37-2.1 147.9 0 184.9 1.7 35.9 9.900 67.700 36.200 93.900s58 34.400 93.900 36.200c37 2.100 147.900 2.100 184.900 0 35.900-1.700 67.700-9.900 93.900-36.200 26.200-26.200 34.400-58 36.200-93.900 2.100-37 2.100-147.800 0-184.800zM398.800 388c-7.800 19.600-22.900 34.700-42.600 42.600-29.500 11.700-99.500 9-132.100 9s-102.700 2.600-132.100-9c-19.600-7.800-34.700-22.900-42.600-42.600-11.700-29.500-9-99.500-9-132.100s-2.600-102.700 9-132.100c7.800-19.600 22.900-34.700 42.600-42.600 29.500-11.700 99.500-9 132.100-9s102.700-2.600 132.100 9c19.600 7.800 34.700 22.900 42.600 42.600 11.700 29.500 9 99.500 9 132.100s2.700 102.700-9 132.100z" fill="#434b68" /></svg>
<svg style="position:absolute;left:1852.3px;top:512.4px;" width="8.6" height="14.9" viewBox="0 0 320 512"><path d="M279.14 288l14.22-92.66h-88.91v-60.13c0-25.35 12.42-50.06 52.24-50.06h40.42V6.26S260.43 0 225.36 0c-73.22 0-121.08 44.38-121.08 124.72v70.62H22.89V288h81.39v224h100.17V288z" fill="#434b68" /></svg>
<span id="t102" style="position:absolute;top:548.60px;font-size:15px;line-height:1;white-space:pre;color:#3a3c4a;left:300.00px;transform:translateX(-50%);margin-left:0.00px;">10</span>
<div style="position:absolute;left:339.2px;top:549.0px;width:14.7px;height:15.2px;border:1px solid #8c8d94;border-radius:2.5px;background:#fff"></div>
<span id="t103" style="position:absolute;top:548.60px;font-size:15px;line-height:1;white-space:pre;color:#2873b9;letter-spacing:0.090px;left:383.00px;">tthe notebook</span>
<svg style="position:absolute;left:487.1px;top:547.7px;" width="23" height="20.2" viewBox="0 0 576 512"><path d="M569.517 440.013C587.975 472.007 564.806 512 527.940 512H48.054c-36.937 0-59.999-40.055-41.577-71.987L246.423 23.985c18.467-32.009 64.720-31.951 83.154 0l239.940 416.028zM288 354c-25.405 0-46 20.595-46 46s20.595 46 46 46 46-20.595 46-46-20.595-46-46-46zm-43.673-165.346l7.418 136c.347 6.364 5.609 11.346 11.982 11.346h48.546c6.373 0 11.635-4.982 11.982-11.346l7.418-136c.375-6.874-5.098-12.654-11.982-12.654h-63.383c-6.884 0-12.356 5.780-11.981 12.654z" fill="#f89c31" /></svg>
<div style="position:absolute;left:674px;top:545.2px;width:34.8px;height:24.6px;background:#1e6fbf;"></div>
<svg style="position:absolute;left:680px;top:547.8px;" width="24" height="19" viewBox="0 0 24 19"><path d="M0 0 H17.300 V18.600 H2.500 Q0 18.600 0 16 Z" fill="#fff"/><rect x="3.200" y="4.100" width="9.300" height="1.600" fill="#1e6fbf"/><rect x="3.200" y="8.400" width="11.200" height="1.600" fill="#1e6fbf"/><rect x="3.200" y="12.700" width="7.400" height="1.600" fill="#1e6fbf"/><path d="M19.600 4.600 H23 V16.400 Q23 18.600 21 18.600 H19.600 Z" fill="#fff"/></svg>
<div style="position:absolute;left:711.2px;top:545.2px;width:34.8px;height:24.6px;background:#1e6fbf;"></div>
<svg style="position:absolute;left:717.8px;top:554.8px;" width="21.4" height="5.4" viewBox="0 0 21.4 5.4"><circle cx="2.7" cy="2.7" r="2.600" fill="#fff"/><circle cx="10.700" cy="2.7" r="2.600" fill="#fff"/><circle cx="18.700" cy="2.7" r="2.600" fill="#fff"/></svg>
<svg style="position:absolute;left:756px;top:553.1px;" width="5.8" height="9.4" viewBox="0 0 6 10"><path d="M0 0.800 Q0 -0.300 0.900 0.400 L5.600 4.500 Q6.200 5 5.600 5.500 L0.900 9.600 Q0 10.300 0 9.200 Z" fill="#1e6fbf" /></svg>
<span id="t104" style="position:absolute;top:548.60px;font-size:15px;line-height:1;white-space:pre;color:#3a3c4a;right:960.50px;">1</span>
<span id="t105" style="position:absolute;top:548.60px;font-size:15px;line-height:1;white-space:pre;color:#3a3c4a;letter-spacing:-0.016px;right:798.02px;">368K</span>
<span id="t106" style="position:absolute;top:548.60px;font-size:15px;line-height:1;white-space:pre;color:#3a3c4a;letter-spacing:-0.401px;right:629.40px;">0,30</span>
<span id="t107" style="position:absolute;top:548.60px;font-size:15px;line-height:1;white-space:pre;color:#3a3c4a;right:429.00px;">1</span>
<span id="t108" style="position:absolute;top:548.60px;font-size:15px;line-height:1;white-space:pre;color:#3a3c4a;right:273.00px;">698M</span>
<svg style="position:absolute;left:1748.8px;top:550.2px;" width="15.6" height="13.6" viewBox="0 0 576 512"><path d="M549.655 124.083c-6.281-23.65-24.787-42.276-48.284-48.597C458.781 64 288 64 288 64S117.22 64 74.629 75.486c-23.497 6.322-42.003 24.947-48.284 48.597-11.412 42.867-11.412 132.305-11.412 132.305s0 89.438 11.412 132.305c6.281 23.65 24.787 41.5 48.284 47.821C117.22 448 288 448 288 448s170.78 0 213.371-11.486c23.497-6.321 42.003-24.171 48.284-47.821 11.412-42.867 11.412-132.305 11.412-132.305s0-89.438-11.412-132.305zm-317.51 213.508V175.185l142.739 81.205-142.739 81.201z" fill="#1d1d22" /></svg>
<svg style="position:absolute;left:1772.3px;top:549.7px;" width="8.6" height="14.9" viewBox="0 0 320 512"><path d="M279.14 288l14.22-92.66h-88.91v-60.13c0-25.35 12.42-50.06 52.24-50.06h40.42V6.26S260.43 0 225.36 0c-73.22 0-121.08 44.38-121.08 124.72v70.62H22.89V288h81.39v224h100.17V288z" fill="#434b68" /></svg>
<svg style="position:absolute;left:1790.1000000000001px;top:550.3000000000001px;" width="13.2" height="13.6" viewBox="0 0 496 512"><path d="M496 256c0 137-111 248-248 248-25.600 0-50.200-3.900-73.400-11.100 10.100-16.500 25.200-43.500 30.800-65 3-11.600 15.400-59 15.400-59 8.100 15.400 31.700 28.500 56.800 28.500 74.800 0 128.700-68.800 128.700-154.300 0-81.900-66.900-143.200-152.900-143.200-107 0-163.900 71.800-163.900 150.100 0 36.400 19.400 81.700 50.300 96.100 4.700 2.200 7.200 1.200 8.300-3.300.8-3.400 5-20.300 6.900-28.100.6-2.500.3-4.700-1.700-7.100-10.100-12.500-18.300-35.300-18.300-56.600 0-54.700 41.400-107.600 112-107.600 60.900 0 103.600 41.500 103.600 100.900 0 67.100-33.900 113.600-78 113.600-24.300 0-42.600-20.100-36.700-44.800 7-29.500 20.500-61.300 20.500-82.600 0-19-10.200-34.900-31.400-34.900-24.900 0-44.900 25.700-44.900 60.200 0 22 7.400 36.800 7.400 36.800s-24.500 103.800-29 123.200c-5 21.400-3 51.600-.9 71.200C65.400 450.900 0 361.100 0 256 0 119 111 8 248 8s248 111 248 248z" fill="#434b68" /></svg>
<svg style="position:absolute;left:1807.7px;top:547.1px;" width="18" height="20" viewBox="0 0 18 20"><text x="8.800" y="14.100" font-family="Liberation Sans, sans-serif" font-weight="700" font-size="19" text-anchor="middle" fill="#434b68">a</text><path d="M1.600 15.200 Q8.200 19 14.600 15.800" fill="none" stroke="#434b68" stroke-width="1" stroke-linecap="round"/><path d="M13.300 15 L15.900 14.800 L15 17" fill="none" stroke="#434b68" stroke-width="0.750"/></svg>
<svg style="position:absolute;left:1830.2px;top:550.1px;" width="12.9" height="14.74" viewBox="0 0 448 512"><path d="M224.1 141c-63.6 0-114.9 51.3-114.9 114.9s51.3 114.9 114.9 114.9S339 319.5 339 255.9 287.7 141 224.1 141zm0 189.6c-41.1 0-74.7-33.5-74.7-74.7s33.5-74.7 74.7-74.7 74.7 33.5 74.7 74.7-33.6 74.7-74.7 74.7zm146.4-194.3c0 14.9-12 26.8-26.8 26.8-14.9 0-26.8-12-26.8-26.8s12-26.8 26.8-26.8 26.8 12 26.8 26.8zm76.1 27.2c-1.7-35.9-9.9-67.7-36.2-93.9-26.2-26.2-58-34.4-93.9-36.2-37-2.1-147.9-2.1-184.9 0-35.8 1.7-67.6 9.9-93.9 36.1s-34.4 58-36.2 93.9c-2.1 37-2.1 147.9 0 184.9 1.7 35.9 9.900 67.700 36.200 93.900s58 34.400 93.900 36.200c37 2.100 147.900 2.100 184.900 0 35.900-1.700 67.700-9.900 93.900-36.200 26.200-26.200 34.400-58 36.200-93.900 2.100-37 2.100-147.800 0-184.800zM398.800 388c-7.800 19.600-22.900 34.700-42.600 42.600-29.500 11.700-99.500 9-132.100 9s-102.700 2.600-132.100-9c-19.600-7.800-34.700-22.900-42.600-42.600-11.700-29.500-9-99.500-9-132.100s-2.600-102.700 9-132.100c7.800-19.600 22.900-34.700 42.600-42.600 29.500-11.700 99.500-9 132.100-9s102.700-2.600 132.100 9c19.600 7.800 34.700 22.900 42.600 42.600 11.700 29.500 9 99.500 9 132.100s2.700 102.700-9 132.100z" fill="#434b68" /></svg>
<svg style="position:absolute;left:1848.7px;top:549.1px;" width="16" height="16" viewBox="0 0 16 16"><text transform="translate(7.900 12.300) scale(1.07 1)" x="0" y="0" font-family="Liberation Serif, serif" font-size="14.200" text-anchor="middle" fill="#555c76">W</text></svg>
<!-- overlay -->
<svg style="position:absolute;left:0px;top:0px;pointer-events:none;" width="400" height="260" viewBox="0 0 400 260"><defs><filter id="ash" x="-20%" y="-20%" width="140%" height="140%"><feDropShadow dx="0.6" dy="1" stdDeviation="0.9" flood-color="#000" flood-opacity="0.35"/></filter></defs><path d="M335.700 139.400 Q335.400 138 334 138 L268.600 200.200 L260.600 196.500 L259 214.600 L278.200 212.800 L274.200 206.600 Z" fill="#e23c2f" filter="url(#ash)"/></svg>
<div style="position:absolute;left:0px;top:0px;width:1889px;height:2px;background:linear-gradient(#a5dd85 0,#a5dd85 1px,rgba(165,221,133,0.55) 1px,rgba(165,221,133,0.55) 2px);"></div>
</body></html>
